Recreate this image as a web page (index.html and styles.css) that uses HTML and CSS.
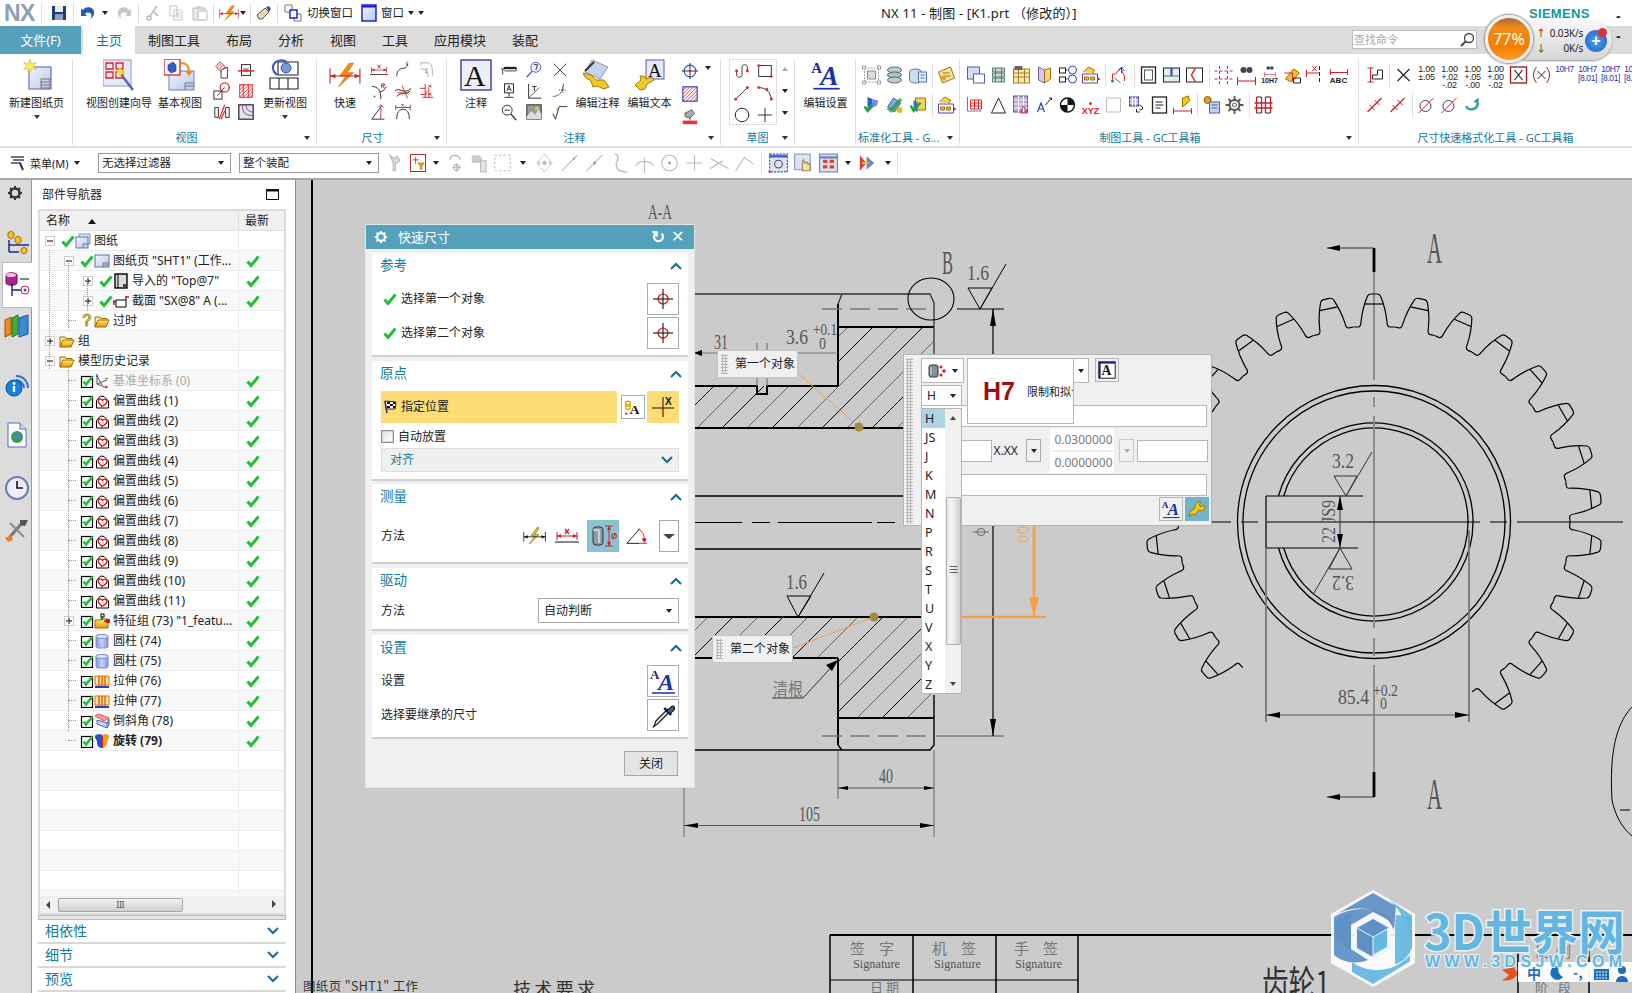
FILE: index.html
```html
<!DOCTYPE html>
<html lang="zh-CN">
<head>
<meta charset="utf-8">
<title>NX 11 - 制图</title>
<link rel="stylesheet" href="styles.css">
</head>
<body>
<svg class="defs" width="0" height="0" aria-hidden="true">
<defs>
<linearGradient id="gFold" x1="0" y1="0" x2="0" y2="1"><stop offset="0" stop-color="#ffe680"/><stop offset="1" stop-color="#e59a00"/></linearGradient>
<linearGradient id="gBlue" x1="0" y1="0" x2="1" y2="1"><stop offset="0" stop-color="#f4f6fc"/><stop offset="1" stop-color="#b9c6ea"/></linearGradient>
<linearGradient id="gCyl" x1="0" y1="0" x2="1" y2="0"><stop offset="0" stop-color="#7f93dd"/><stop offset=".5" stop-color="#c9d3f5"/><stop offset="1" stop-color="#7f93dd"/></linearGradient>
<pattern id="hatch" width="50" height="50" patternUnits="userSpaceOnUse"><path d="M0 50L50 0M-5 5L5-5M45 55L55 45" stroke="#000" stroke-width="1" fill="none"/><path d="M-5 30L30-5M20 55L55 20" stroke="#666" stroke-width="1" fill="none"/></pattern>
<pattern id="rh" width="4" height="4" patternUnits="userSpaceOnUse"><path d="M0 4L4 0" stroke="#d9252b"/></pattern>
</defs>
<symbol id="chk" viewBox="0 0 14 14"><path d="M1.5 7.5L5 11.5L12.5 2.5" fill="none" stroke="#1fbf33" stroke-width="3"/></symbol>
<symbol id="cbox" viewBox="0 0 14 14"><rect x="1.5" y="2.5" width="11" height="11" fill="#fff" stroke="#000" stroke-width="1.2"/><path d="M3.5 7.5L6 10.5L12.5 2.5" fill="none" stroke="#1fbf33" stroke-width="2.6"/></symbol>
<symbol id="minus" viewBox="0 0 10 10"><rect x=".5" y=".5" width="9" height="9" fill="#fff" stroke="#ccc"/><path d="M2 5h6" stroke="#000"/></symbol>
<symbol id="plus" viewBox="0 0 10 10"><rect x=".5" y=".5" width="9" height="9" fill="#fff" stroke="#ccc"/><path d="M2 5h6M5 2v6" stroke="#000"/></symbol>
<symbol id="fold" viewBox="0 0 16 16"><path d="M1 14V4h5l1 1.5h6V8" fill="#fff2b0" stroke="#9a6a00"/><path d="M1 14L4 7h11l-3 7z" fill="url(#gFold)" stroke="#9a6a00"/></symbol>
<symbol id="off" viewBox="0 0 16 16"><path d="M2.500 15V7.500L6.500 3L10 3.500L14.500 8V15z" fill="#fff" stroke="#000"/><path d="M8 13.500L4.500 9.500C3.500 7.500 5 5.500 7 6L8.500 7.300C9.500 5.800 12.500 6 13 8C13.200 9.500 11.500 11.500 8 13.500z" fill="#fff" stroke="#e01010" stroke-width="1.300"/></symbol>
<symbol id="sheets" viewBox="0 0 16 16"><rect x="4" y="1" width="11" height="10" fill="#dfe5f6" stroke="#7f8fc0"/><rect x="1" y="4" width="12" height="11" fill="url(#gBlue)" stroke="#5f74b5"/><path d="M8 11h5M8 11v4" stroke="#5f74b5"/></symbol>
<symbol id="sheet" viewBox="0 0 16 16"><rect x="1" y="2" width="14" height="12" fill="url(#gBlue)" stroke="#5f74b5"/><path d="M9 10h6M9 12h6M9 10v4" stroke="#777"/></symbol>
<symbol id="top" viewBox="0 0 16 16"><rect x="2" y="1" width="12" height="14" fill="#dcdcdc" stroke="#000" stroke-width="1.400"/><path d="M5 1v14" stroke="#000"/><rect x="10" y="11" width="3" height="3" fill="#444"/></symbol>
<symbol id="sect" viewBox="0 0 16 16"><path d="M3 7h10v7H3zM13 7V3" fill="#fff" stroke="#000"/><path d="M0 9h3M1 7v5M13 4h3" stroke="#d01010" stroke-width="1.400"/></symbol>
<symbol id="csys" viewBox="0 0 16 16"><path d="M3 2v9l10-4M3 11l10 4M3 3l5 9" fill="none" stroke="#555"/><path d="M3 1v3" stroke="#2030c0"/><path d="M11 6l3-1" stroke="#1a9a30"/><path d="M11 13l3 1.500" stroke="#d01010"/></symbol>
<symbol id="grp" viewBox="0 0 16 16"><path d="M1 15V7h5l1-1h7v9z" fill="url(#gFold)" stroke="#9a6a00"/><rect x="7" y="1" width="3" height="3" fill="#fff" stroke="#000"/><rect x="12" y="6" width="4" height="4" fill="#e01010"/><path d="M8 4v3M10 8h2" stroke="#000"/></symbol>
<symbol id="cyl" viewBox="0 0 16 16"><rect x="2" y="2" width="12" height="13" rx="2" fill="url(#gCyl)" stroke="#7a8fd0"/><ellipse cx="8" cy="3.500" rx="6" ry="2" fill="#dfe5fb" stroke="#7a8fd0"/></symbol>
<symbol id="ext" viewBox="0 0 16 16"><path d="M1 3h14v9H1z" fill="#fde3b0" stroke="#e07000"/><path d="M5 3v10M11 3v10M8 3v10" stroke="#e07000" stroke-width="1.500"/><path d="M1 14h14" stroke="#2a40c0" stroke-width="2"/></symbol>
<symbol id="chf" viewBox="0 0 16 16"><path d="M1 3L5 1L15 5L10 8Z" fill="#f2a0a0" stroke="#e0584a"/><path d="M3 7L13 10V15L3 11Z" fill="#c9d3f5" stroke="#4a60c0"/><path d="M13 10L15 6V12L13 15" fill="#8fa4e8" stroke="#4a60c0"/></symbol>
<symbol id="rev" viewBox="0 0 16 16"><path d="M1 3C1 1 8 1 8 2V15C4 15 3 12 3 8C2 7 1 5 1 3Z" fill="#2a50c8"/><path d="M8 2C10 1 15 1 15 3C15 5 14 7 13 8C13 12 12 15 8 15Z" fill="#f29a1a"/><path d="M7 3h2v12H7z" fill="#d02020"/></symbol>
<symbol id="maxi" viewBox="0 0 14 12"><rect x=".5" y=".5" width="12" height="10" fill="none" stroke="#111"/><path d="M.5 1.500h12" stroke="#111" stroke-width="2"/></symbol>
<symbol id="up" viewBox="0 0 12 8"><path d="M1 7L6 2L11 7" fill="none" stroke="#0f6f8f" stroke-width="2"/></symbol>
<symbol id="cvd" viewBox="0 0 12 8"><path d="M1 1L6 6L11 1" fill="none" stroke="#0f6f8f" stroke-width="2"/></symbol>
<symbol id="gear" viewBox="0 0 16 16"><circle cx="8" cy="8" r="4.500" fill="none" stroke="currentColor" stroke-width="2.600"/><path d="M8 1v3M8 12v3M1 8h3M12 8h3M3 3l2 2M11 11l2 2M13 3l-2 2M5 11l-2 2" stroke="currentColor" stroke-width="2"/></symbol>
<symbol id="tgt" viewBox="0 0 20 20"><circle cx="10" cy="10" r="5" fill="none" stroke="#e01010" stroke-width="1.200"/><path d="M0 10h20M10 0v20" stroke="#000" stroke-width="1"/></symbol>
<symbol id="flag" viewBox="0 0 14 14"><path d="M2 1L13 2L12 9L3 9Z" fill="#fff" stroke="#222"/><path d="M4 2h3v2H4zM10 2h2v2h-2zM7 4h3v2H7zM4 6h3v2H4zM10 6h2v2h-2z" fill="#111"/><path d="M2 1L4 13" stroke="#2a2a80" stroke-width="1.500"/></symbol>
<symbol id="drop" viewBox="0 0 24 24"><path d="M4 22l2-5L16 7l2 2L8 19z" fill="#cfe3ee" stroke="#111"/><path d="M13 6l6 6" stroke="#111" stroke-width="2"/><path d="M15 9l4-4c2-2 4 1 2 3l-3 3z" fill="#1e6fb0" stroke="#111"/></symbol>
<symbol id="wrench" viewBox="0 0 20 20"><path d="M2 18l3-3 3 1 4-5 3 1 3-3-1-3-3 2-2-2 2-3h-3l-3 3v3l-5 4z" fill="#f4c814" stroke="#9b7a00"/></symbol>
<symbol id="qd" viewBox="0 0 30 24"><path d="M18 1l-8 11h5L8 22l12-12h-5l5-8z" fill="#f4c814" stroke="#444" stroke-width=".7"/><path d="M1 7v12M28 7v12M1 13h27" stroke="#111" fill="none"/><path d="M1 13l5-2v4zM28 13l-5-2v4z" fill="#111"/></symbol>
<symbol id="qdr" viewBox="0 0 30 24"><path d="M19 1l-9 12h6L9 23l14-13h-6l6-9z" fill="#f58a16" stroke="#d56a00" stroke-width=".7"/><path d="M1 6v14M29 6v14M1 13h28" stroke="#c8202a" fill="none"/><path d="M1 13l5-2v4zM29 13l-5-2v4z" fill="#c8202a"/></symbol>
<symbol id="dx" viewBox="0 0 24 16"><path d="M10 1l4 5M14 1l-4 5" stroke="#c8202a" stroke-width="1.300"/><path d="M2 4v8M22 4v8M2 8h20" stroke="#c8202a"/><path d="M0 14h24" stroke="#111"/><path d="M2 8l4-2v4zM22 8l-4-2v4z" fill="#c8202a"/></symbol>
<symbol id="dm" viewBox="0 0 32 32"><rect width="32" height="32" fill="#8cc1d2"/><rect x="6" y="7" width="10" height="18" rx="3" fill="#8e9ea8" stroke="#333"/><path d="M6 10h6v13" stroke="#fff" fill="none"/><path d="M18 6h8M18 26h8M22 6v20" stroke="#c8202a"/><path d="M22 6l-2 4h4zM22 26l-2-4h4z" fill="#c8202a"/><circle cx="27" cy="16" r="2.500" fill="none" stroke="#c8202a"/><path d="M25 19l4-6" stroke="#c8202a"/></symbol>
<symbol id="ang" viewBox="0 0 24 24"><path d="M1 20L15 4M1 20h14" stroke="#111" fill="none"/><path d="M13 4c6 3 7 8 7 13" fill="none" stroke="#c8202a"/><path d="M20 19l-2-4h4zM15 20h8" fill="#c8202a" stroke="#c8202a"/></symbol>
<symbol id="ddi" viewBox="0 0 20 20"><rect x="2" y="4" width="9" height="12" rx="2" fill="#7f8f9a" stroke="#333"/><path d="M4 6v8" stroke="#ddd"/><circle cx="14" cy="6" r="1.500" fill="#c8202a"/><circle cx="17" cy="10" r="1.800" fill="#c8202a"/><circle cx="14" cy="14" r="1.500" fill="#c8202a"/></symbol>
<symbol id="new" viewBox="0 0 32 32"><rect x="8" y="8" width="22" height="22" fill="url(#gBlue)" stroke="#6d7fc4" stroke-width="1.300"/><path d="M20 23h9M20 26h9M20 20h9v9h-9z" fill="none" stroke="#777"/><path d="M9 0l1.500 5 5-1.500-3.500 3.500 3.500 3.500-5-1L9 14 7.500 9.500l-5 1L6 7 2.500 3.500l5 1.500z" fill="#ffee60" stroke="#c8b020" stroke-width=".6"/></symbol>
<symbol id="wiz" viewBox="0 0 32 32"><rect x="0" y="1" width="28" height="26" fill="#e6e9f6" stroke="#8a96c8"/><path d="M3 4h7v6H3zM13 4h7v6h-7zM3 13h7v6H3zM13 13h7v6h-7z" fill="none" stroke="#d9252b" stroke-width="1.300"/><path d="M17 14l13 17" stroke="#5866b8" stroke-width="2.500"/><path d="M17 7l1.500 4 4-1-3 3 3 3-4-1L17 19l-1.500-4-4 1 3-3-3-3 4 1z" fill="#f2e040"/></symbol>
<symbol id="base" viewBox="0 0 32 32"><rect x="5" y="12" width="25" height="19" fill="url(#gBlue)" stroke="#6d7fc4"/><path d="M21 24h9M21 27h9M21 24v7" stroke="#777"/><rect x="0" y="0" width="16" height="16" fill="#f7f7f7" stroke="#d9252b" stroke-width="1.300"/><path d="M4 6l5-3 3 3v6l-5 2-3-3z" fill="#3360c0" stroke="#123a90" stroke-width=".6"/><path d="M17 4c6 0 8 3 8 9" fill="none" stroke="#f08a10" stroke-width="2"/><path d="M21 12h8l-4 5z" fill="#f08a10"/></symbol>
<symbol id="upd" viewBox="0 0 32 32"><path d="M9 3h20v13H9zM1 19h28v11H1zM10 19v11M19 19v11" fill="none" stroke="#222" stroke-width="1.100"/><path d="M8 16C-2 8 8-3 18 3" fill="none" stroke="#3a55c0" stroke-width="2"/><circle cx="17" cy="9" r="5" fill="#7e97d8" stroke="#3a55c0"/></symbol>
<symbol id="edn" viewBox="0 0 32 32"><path d="M10 1l16 7-8 12-15-7z" fill="#c8d2ec" stroke="#8b97c8"/><path d="M1 14l8 2 5 5 8 0 5 7-5 2-7-3-4 1-2-6-6-4z" fill="#f2c82a" stroke="#9a7f00"/><path d="M3 12L12 3" stroke="#333" stroke-width="2"/></symbol>
<symbol id="s1" viewBox="0 0 20 20"><path d="M8 1l9 9-5 5-9-9z" fill="url(#rh)" stroke="#d9252b"/><path d="M9 10l7-3v12H9z" fill="#fff" stroke="#333"/></symbol>
<symbol id="s2" viewBox="0 0 20 20"><rect x="5" y="4" width="10" height="12" fill="#fff" stroke="#222"/><path d="M7 8h6v4H7z" fill="#999"/><path d="M1 11h18" stroke="#d9252b" stroke-width="1.600"/></symbol>
<symbol id="s3" viewBox="0 0 20 20"><circle cx="13" cy="6" r="5" fill="#fff" stroke="#d9252b" stroke-width="1.400"/><rect x="1" y="10" width="9" height="9" fill="#fff" stroke="#222"/><path d="M5 15l8-9" stroke="#333"/></symbol>
<symbol id="s4" viewBox="0 0 20 20"><rect x="3" y="3" width="14" height="14" fill="url(#rh)" stroke="#d9252b"/><path d="M7 3v14M13 3v14" stroke="#d9252b"/></symbol>
<symbol id="s5" viewBox="0 0 20 20"><path d="M2 5h4v11H2zM14 5h4v11h-4z" fill="none" stroke="#222"/><path d="M7 18L13 2M9 18l4-9" stroke="#d9252b" stroke-width="1.300"/></symbol>
<symbol id="s6" viewBox="0 0 20 20"><rect x="2" y="2" width="16" height="16" fill="#dfe3f2" stroke="#222" stroke-width="1.300"/><path d="M6 2c0 9 3 12 12 12M10 2c0 5 3 8 8 8" fill="none" stroke="#a03080"/></symbol>
<symbol id="d2" viewBox="0 0 20 20"><path d="M3 17c0-6 3-9 8-9 3 0 4-3 4-5" fill="none" stroke="#222"/><path d="M16 1c-3 0-3 4 0 4" fill="none" stroke="#c8202a"/></symbol>
<symbol id="d3" viewBox="0 0 20 20"><path d="M3 2h7c6 0 6 6 6 14M3 2v3M3 9c8 0 8 3 8 9" fill="none" stroke="#aaa"/><path d="M11 9H8l2 2-2 2h3" fill="none" stroke="#999"/></symbol>
<symbol id="d4" viewBox="0 0 20 20"><path d="M2 5c7 0 10 4 10 14M11 11c3 0 6-3 7-6" fill="none" stroke="#222"/><path d="M13 7V2h3v2h-3M14 4l2 3" fill="none" stroke="#c8202a"/><circle cx="5" cy="16" r="1" fill="#555"/></symbol>
<symbol id="d5" viewBox="0 0 20 20"><path d="M1 10c5-5 10 5 18-3M3 16c6-6 8 0 15-6" fill="none" stroke="#222"/><path d="M9 4L15 18M4 12h12" stroke="#c8202a"/></symbol>
<symbol id="d6" viewBox="0 0 20 20"><path d="M8 2v15M2 7h6M5 17h12M3 14h6v-4M12 6v11" fill="none" stroke="#c8202a"/><path d="M12 3l3 3M15 3l-3 3M12 12l3 3M15 12l-3 3" stroke="#c8202a"/></symbol>
<symbol id="d7" viewBox="0 0 20 20"><path d="M2 18L13 3M2 18h14" fill="none" stroke="#222"/><path d="M12 5v13M9 5l3-3 3 3" fill="none" stroke="#c8202a"/></symbol>
<symbol id="d8" viewBox="0 0 20 20"><path d="M3 18c0-8 3-11 7-11s7 3 7 11" fill="none" stroke="#222"/><path d="M2 5h16M2 2v6M18 2v6" stroke="#c8202a"/><path d="M8 1l3 3M11 1L8 4" stroke="#c8202a"/></symbol>
<symbol id="n1" viewBox="0 0 20 20"><path d="M1 9h4v-2h13v4H5M3 9v6" fill="none" stroke="#333"/><path d="M4 8h14" stroke="#111" stroke-width="2"/></symbol>
<symbol id="n2" viewBox="0 0 20 20"><circle cx="12" cy="7" r="5.500" fill="#eef" stroke="#3a55c0"/><path d="M8 11L2 18" stroke="#3a55c0" stroke-width="1.400"/><path d="M10 4h4l-2 6" fill="none" stroke="#222"/></symbol>
<symbol id="n3" viewBox="0 0 20 20"><path d="M3 3l14 14M17 3L3 17" stroke="#333"/></symbol>
<symbol id="n4" viewBox="0 0 20 20"><rect x="5" y="2" width="10" height="10" fill="#fff" stroke="#222"/><path d="M7.500 10L10 4l2.500 6M8.500 8h3" fill="none" stroke="#222"/><path d="M10 12v4M5 17h10" stroke="#222"/></symbol>
<symbol id="n5" viewBox="0 0 20 20"><path d="M4 2v16h14" fill="none" stroke="#222"/><path d="M4 18L16 6" stroke="#555"/><path d="M8 5h5M10.500 5v5" stroke="#222"/></symbol>
<symbol id="n6" viewBox="0 0 20 20"><path d="M2 16c8 0 11-5 12-14" fill="none" stroke="#3a55c0"/><path d="M9 9h8M13 5v8" stroke="#222" stroke-dasharray="1 1"/></symbol>
<symbol id="n7" viewBox="0 0 20 20"><circle cx="8" cy="8" r="5.500" fill="#fff" stroke="#222"/><path d="M12 12l6 7" stroke="#222" stroke-width="1.400"/><path d="M5 8h6" stroke="#222"/></symbol>
<symbol id="n8" viewBox="0 0 20 20"><rect x="2" y="2" width="16" height="16" fill="#999" stroke="#222"/><path d="M2 15l5-6 4 4 4-6 3 5v6H2z" fill="#ddd"/><circle cx="13" cy="6" r="2" fill="#f0c040"/></symbol>
<symbol id="n9" viewBox="0 0 20 20"><path d="M2 12l3 6 4-14h9" fill="none" stroke="#222"/><path d="M9 4l-3 4" stroke="#888"/></symbol>
<symbol id="n10" viewBox="0 0 20 20"><circle cx="10" cy="10" r="6.500" fill="none" stroke="#3a55c0" stroke-width="1.300"/><path d="M1 10h18M10 1v18" stroke="#222"/><circle cx="10" cy="10" r="1.500" fill="#d9252b"/></symbol>
<symbol id="n11" viewBox="0 0 20 20"><rect x="2" y="2" width="16" height="16" fill="url(#rh)" stroke="#3a55c0" stroke-width="1.400"/></symbol>
<symbol id="n12" viewBox="0 0 20 20"><path d="M4 6l8-4 3 4-5 5-5-1z" fill="#aaa" stroke="#555"/><path d="M10 11v3" stroke="#333"/><rect x="2" y="14" width="16" height="4" fill="#e8333a"/></symbol>
<symbol id="sk1" viewBox="0 0 20 20"><path d="M4 10v4c0 4 6 4 6 0V6c0-4 6-4 6 0v4" fill="none" stroke="#222"/><circle cx="4" cy="10" r="1.600" fill="#d9252b"/><circle cx="16" cy="10" r="1.600" fill="#d9252b"/></symbol>
<symbol id="sk2" viewBox="0 0 20 20"><rect x="3" y="4" width="14" height="12" fill="none" stroke="#222"/><circle cx="3" cy="4" r="1.500" fill="#d9252b"/><circle cx="17" cy="16" r="1.500" fill="#d9252b"/></symbol>
<symbol id="sk3" viewBox="0 0 20 20"><path d="M3 17L16 4" stroke="#222"/><circle cx="3" cy="17" r="1.600" fill="#d9252b"/><circle cx="16" cy="4" r="1.600" fill="#d9252b"/></symbol>
<symbol id="sk4" viewBox="0 0 20 20"><path d="M3 4c8 0 13 5 14 13" fill="none" stroke="#222"/><circle cx="3" cy="4" r="1.600" fill="#d9252b"/><circle cx="12" cy="6" r="1.600" fill="#d9252b"/><circle cx="17" cy="17" r="1.600" fill="#d9252b"/></symbol>
<symbol id="sk5" viewBox="0 0 20 20"><circle cx="10" cy="10" r="7.500" fill="none" stroke="#222" stroke-width="1.100"/></symbol>
<symbol id="sk6" viewBox="0 0 20 20"><path d="M10 2v16M2 10h16" stroke="#222"/></symbol>
<symbol id="g1" viewBox="0 0 20 20"><path d="M3 3h14v14H3z" fill="none" stroke="#9aa" stroke-dasharray="2 1"/><path d="M6 6h8v8H6z" fill="#ddd" stroke="#888"/><path d="M1 1h3v3H1zM16 1h3v3h-3zM1 16h3v3H1zM16 16h3v3h-3z" fill="#fff" stroke="#999"/></symbol>
<symbol id="g2" viewBox="0 0 20 20"><ellipse cx="10" cy="5" rx="7" ry="3" fill="#bcd" stroke="#567"/><ellipse cx="10" cy="10" rx="7" ry="3" fill="#a9c9a6" stroke="#567"/><ellipse cx="10" cy="15" rx="7" ry="3" fill="#bcd" stroke="#567"/></symbol>
<symbol id="g3" viewBox="0 0 20 20"><ellipse cx="8" cy="7" rx="6" ry="3" fill="#cde" stroke="#678"/><path d="M2 7v8c0 4 12 4 12 0V7" fill="#cde" stroke="#678"/><rect x="11" y="7" width="8" height="10" fill="#e6eaf6" stroke="#5a73c0"/><path d="M13 10h4M13 13h4" stroke="#5a73c0"/></symbol>
<symbol id="g4" viewBox="0 0 20 20"><path d="M2 7l12-5 4 11-12 5z" fill="#f5e3a8" stroke="#a07000"/><path d="M6 8h7M7 11h7" stroke="#a07000"/><circle cx="7" cy="13" r="2.500" fill="#f2a010"/></symbol>
<symbol id="g5" viewBox="0 0 20 20"><path d="M6 2l5 2v9l-5-1z" fill="#2a60d0"/><path d="M2 12l4 6 11-12-3-1-8 8-2-2z" fill="#20a040"/><path d="M11 4l5 2v4l-5 3z" fill="#6a90e0"/></symbol>
<symbol id="g6" viewBox="0 0 20 20"><path d="M3 12L9 3l7 5-6 9z" fill="#8aa8e8" stroke="#3a55c0"/><path d="M2 14l5 4 11-13-3-2-8 9z" fill="#20a040" opacity=".8"/><circle cx="15" cy="15" r="3" fill="#e8b820"/></symbol>
<symbol id="g7" viewBox="0 0 20 20"><path d="M8 3h10v12H8z" fill="#f4d060" stroke="#a07000"/><path d="M6 5l4 2v10l-4-2z" fill="#3a70d0"/><path d="M2 11l4 7 8-10-2-1-6 6-2-3z" fill="#20a040"/></symbol>
<symbol id="g8" viewBox="0 0 20 20"><path d="M2 9h15v9H2z" fill="#fff" stroke="#5a3fb0"/><path d="M4 12h4v3H4zM10 12h4v3h-4z" fill="#f2c020" stroke="#a07000"/><path d="M3 7l5-5 6 3-2 4" fill="#f2d060" stroke="#a07000"/><path d="M17 12l3 2-3 2z" fill="#a030b0"/></symbol>
<symbol id="t1" viewBox="0 0 20 20"><rect x="2" y="2" width="12" height="12" fill="#d4dcf4" stroke="#4a60b0"/><rect x="8" y="9" width="11" height="9" fill="#fff" stroke="#4a60b0"/></symbol>
<symbol id="t2" viewBox="0 0 20 20"><path d="M4 3h12v4H4zM4 8h12v4H4zM4 13h12v4H4z" fill="#c7d9cb" stroke="#5a7d70"/><path d="M7 3v14M13 3v14" stroke="#5a7d70"/></symbol>
<symbol id="t3" viewBox="0 0 20 20"><rect x="2" y="4" width="16" height="14" fill="#fce9a8" stroke="#a08030"/><path d="M2 8h16M2 12h16M7 4v14M13 4v14" stroke="#a08030"/><path d="M3 1h8v4H3z" fill="#666"/></symbol>
<symbol id="t4" viewBox="0 0 20 20"><path d="M4 2l6 3v13l-6-3z" fill="#d8c7f0" stroke="#7060b0"/><path d="M10 5l6-2v11l-6 4z" fill="#f4d680" stroke="#a07000"/></symbol>
<symbol id="t5" viewBox="0 0 20 20"><rect x="2" y="3" width="6" height="5" fill="none" stroke="#222"/><rect x="2" y="12" width="6" height="5" fill="none" stroke="#222"/><path d="M8 5h2M8 14h2" stroke="#222"/><circle cx="15" cy="5" r="4" fill="#fff" stroke="#2a40c0"/><circle cx="15" cy="14" r="4" fill="#fff" stroke="#2a40c0"/></symbol>
<symbol id="t7" viewBox="0 0 20 20"><path d="M3 16V9h3l5-6 4 8v5" fill="none" stroke="#d9252b"/><circle cx="3" cy="16" r="1.500" fill="#1a9a30"/><path d="M12 2v6M9 6l3-4 3 4" stroke="#2a40c0" fill="none"/><path d="M5 13l6 5" stroke="#1a9a30"/></symbol>
<symbol id="t8" viewBox="0 0 20 20"><rect x="3" y="2" width="14" height="16" fill="#fff" stroke="#222" stroke-width="1.300"/><rect x="6" y="5" width="8" height="10" fill="none" stroke="#555"/></symbol>
<symbol id="t9" viewBox="0 0 20 20"><rect x="2" y="3" width="16" height="14" fill="#e6ebf4" stroke="#222"/><path d="M10 3v8" stroke="#2a40c0" stroke-width="2"/><path d="M2 11h16" stroke="#1a9a30"/></symbol>
<symbol id="t10" viewBox="0 0 20 20"><rect x="2" y="3" width="16" height="14" fill="#fff" stroke="#222"/><path d="M11 3l-4 7 4 7" fill="none" stroke="#d9252b" stroke-width="1.500"/></symbol>
<symbol id="t11" viewBox="0 0 20 20"><path d="M6 1v18M14 1v18M1 6h18M1 14h18" stroke="#c02080" stroke-dasharray="3 2"/></symbol>
<symbol id="t12" viewBox="0 0 20 20"><circle cx="7" cy="5" r="3" fill="#445"/><circle cx="13" cy="5" r="3" fill="#445"/><path d="M1 16h18M1 12v8M19 12v8" stroke="#c8202a"/></symbol>
<symbol id="t13" viewBox="0 0 20 20"><path d="M3 14l8-10 6 4-8 9z" fill="#f2c020" stroke="#a07000"/><path d="M2 8h8v8" fill="none" stroke="#d9252b"/><path d="M11 13h7v5h-7z" fill="none" stroke="#222"/></symbol>
<symbol id="t14" viewBox="0 0 20 20"><path d="M14 1v18" stroke="#222" stroke-dasharray="4 2"/><path d="M1 8h13M1 5v7" stroke="#c8202a"/><path d="M7 1l4 5M11 1L7 6" stroke="#c8202a"/></symbol>
<symbol id="u1" viewBox="0 0 20 20"><path d="M3 3h6M3 17h6M6 3v14" stroke="#c8202a"/><path d="M8 14h10V5h-5v5H8z" fill="none" stroke="#222"/></symbol>
<symbol id="u2" viewBox="0 0 20 20"><path d="M4 4l12 12M16 4L4 16" stroke="#222" stroke-width="1.200"/></symbol>
<symbol id="u3" viewBox="0 0 20 20"><rect x="2" y="2" width="16" height="16" fill="none" stroke="#a02020" stroke-width="1.400"/><path d="M6 5l8 10M14 5L6 15" stroke="#222" stroke-width="1.200"/></symbol>
<symbol id="u4" viewBox="0 0 20 20"><path d="M5 2c-4 5-4 11 0 16M15 2c4 5 4 11 0 16" fill="none" stroke="#a02020"/><path d="M6 6l8 8M14 6l-8 8" stroke="#222"/></symbol>
<symbol id="u5" viewBox="0 0 20 20"><path d="M3 17L17 3" stroke="#c8202a" stroke-width="1.300"/><path d="M5 10l5 5M10 5l5 5" stroke="#c8202a"/></symbol>
<symbol id="u6" viewBox="0 0 20 20"><circle cx="9" cy="11" r="5.500" fill="none" stroke="#444"/><path d="M2 18L17 3" stroke="#c8202a"/></symbol>
<symbol id="u7" viewBox="0 0 20 20"><path d="M4 11c0 4 9 5 11-1V5l-3 2" fill="none" stroke="#38a0a8" stroke-width="2.500"/></symbol>
<symbol id="y1" viewBox="0 0 20 20"><path d="M3 3h14v14H3z" fill="#fff" stroke="#bbb"/></symbol>
<symbol id="y2" viewBox="0 0 20 20"><path d="M2 2v14h14" fill="none" stroke="#777"/><path d="M5 5h11v9H5z" fill="none" stroke="#d9252b"/><path d="M5 8h11M5 11h11M9 5v9M13 5v9" stroke="#d9252b"/></symbol>
<symbol id="y3" viewBox="0 0 20 20"><path d="M10 3l-7 15h14z" fill="none" stroke="#222"/></symbol>
<symbol id="y4" viewBox="0 0 20 20"><rect x="2" y="1" width="14" height="16" fill="#bba8e0" stroke="#666"/><path d="M2 5h14M2 9h14M2 13h14M7 1v16M12 1v16" stroke="#fff"/><path d="M12 11l-3 7h7z" fill="none" stroke="#d9252b"/></symbol>
<symbol id="y5" viewBox="0 0 20 20"><path d="M3 17l3.500-9L10 17M4.500 14h4" fill="none" stroke="#2a40c0" stroke-width="1.200"/><path d="M11 10l6-7M15 3h2v2" stroke="#222" fill="none"/></symbol>
<symbol id="y6" viewBox="0 0 20 20"><circle cx="10" cy="10" r="7" fill="#fff" stroke="#111" stroke-width="1.400"/><path d="M10 3a7 7 0 0 1 7 7h-7zM10 17a7 7 0 0 1-7-7h7z" fill="#111"/></symbol>
<symbol id="y8" viewBox="0 0 20 20"><rect x="3" y="2" width="9" height="9" fill="#bba8e0" stroke="#3a3aa0"/><path d="M3 5h9M3 8h9M6 2v9M9 2v9" stroke="#fff"/><path d="M13 10l3 2v2l-3 1M10 14v3h3" fill="none" stroke="#222"/></symbol>
<symbol id="y9" viewBox="0 0 20 20"><rect x="3" y="2" width="14" height="16" fill="#fff" stroke="#222" stroke-width="1.300"/><path d="M6 7h7M6 10h8M6 13h5" stroke="#222"/></symbol>
<symbol id="y10" viewBox="0 0 20 20"><path d="M10 3l6-2 1 5-7 6z" fill="#f4c814" stroke="#a07000"/><path d="M1 16h18M1 13v6M19 13v6" stroke="#c8202a"/></symbol>
<symbol id="y11" viewBox="0 0 20 20"><rect x="8" y="7" width="10" height="11" fill="#c4d0f0" stroke="#4a60b0"/><path d="M10 10h6M10 13h6" stroke="#4a60b0"/><circle cx="6" cy="5" r="3.500" fill="#e0a020" stroke="#906000"/></symbol>
<symbol id="y12" viewBox="0 0 20 20"><circle cx="10" cy="10" r="5" fill="none" stroke="#555" stroke-width="2"/><circle cx="10" cy="10" r="2" fill="none" stroke="#555"/><path d="M10 1v4M10 15v4M1 10h4M15 10h4M4 4l2.500 2.500M13.500 13.500L16 16M16 4l-2.500 2.500M6.500 13.500L4 16" stroke="#555" stroke-width="1.800"/></symbol>
<symbol id="y13" viewBox="0 0 20 20"><path d="M3 2v16M8 2v16M12 2v16M17 2v16M1 8h18M1 13h18" stroke="#c8202a" stroke-width="1.300"/><path d="M3 2h5M12 2h5M3 18h5M12 18h5" stroke="#222"/></symbol>
<symbol id="save" viewBox="0 0 16 16"><path d="M1 1h14v14H1z" fill="#1f3f72"/><rect x="4" y="1" width="8" height="6" fill="#e8eef6"/><rect x="4" y="9" width="8" height="6" fill="#8aa0c4"/></symbol>
<symbol id="undo" viewBox="0 0 16 16"><path d="M5 3c5-2 10 1 9 6-.5 2.500-2 4-4 5 2-2 2-5 0-6-2-1-4-.5-5 1l2 2H1V4l2 1z" fill="#1d5fae"/></symbol>
<symbol id="redo" viewBox="0 0 16 16"><path d="M11 3C6 1 1 4 2 9c.5 2.500 2 4 4 5-2-2-2-5 0-6 2-1 4-.5 5 1l-2 2h6V4l-2 1z" fill="#c8c8c8"/></symbol>
<symbol id="cut" viewBox="0 0 16 16"><path d="M12 1L5 11M8 6l5 5" stroke="#bbb" stroke-width="1.500"/><circle cx="4" cy="13" r="2" fill="none" stroke="#bbb" stroke-width="1.500"/></symbol>
<symbol id="copy" viewBox="0 0 16 16"><path d="M2 1h7v10H2zM6 5h7l1 1v9H6z" fill="#fff" stroke="#c4c4c4"/><path d="M8 8h4M8 10h4M8 12h4" stroke="#c4c4c4"/></symbol>
<symbol id="paste" viewBox="0 0 16 16"><path d="M1 3h12v12H1z" fill="#e8e8e8" stroke="#bbb"/><path d="M5 1h4v3H5z" fill="#ccc"/><path d="M6 6h9v9H6z" fill="#fff" stroke="#bbb"/></symbol>
<symbol id="eraser" viewBox="0 0 16 16"><path d="M1 10l8-7 4 4-7 7H3z" fill="#e8d8a8" stroke="#555"/><path d="M10 2l3-1 2 3-2 3z" fill="#3a55a0"/></symbol>
<symbol id="swin" viewBox="0 0 18 18"><path d="M1 1h7v7H1zM10 10h7v7h-7z" fill="none" stroke="#777"/><rect x="6" y="6" width="7" height="8" fill="#fff" stroke="#1414d0" stroke-width="1.400"/></symbol>
<symbol id="win" viewBox="0 0 16 18"><rect x="1" y="1" width="14" height="16" fill="url(#gBlue)" stroke="#1414d0" stroke-width="1.400"/><path d="M1 2.500h14" stroke="#1414d0" stroke-width="2"/></symbol>
<symbol id="mag" viewBox="0 0 16 16"><circle cx="10" cy="6" r="4.500" fill="#fff" stroke="#444" stroke-width="1.300"/><path d="M7 9l-5 5" stroke="#444" stroke-width="2"/></symbol>
<symbol id="menu" viewBox="0 0 18 18"><path d="M2 3h13M4 6h11M2 9h10" stroke="#3a4a60" stroke-width="1.400"/><path d="M11 9l3 7" stroke="#333" stroke-width="2"/></symbol>
<symbol id="f1" viewBox="0 0 18 18"><path d="M3 2l4 3 3-2 2 4-4 3v6H6V9z" fill="#d8d8d8" stroke="#bbb"/></symbol>
<symbol id="f2" viewBox="0 0 18 18"><path d="M6 1v9M2 5h8" stroke="#444"/><path d="M9 9h8l-3 4v4h-2v-4z" fill="#f0a020" stroke="#c07a00"/></symbol>
<symbol id="f3" viewBox="0 0 18 18"><path d="M3 6C3 1 12 1 12 6" fill="none" stroke="#bbb" stroke-width="1.500"/><path d="M9 9v8M5 13h8" stroke="#bbb"/><circle cx="9" cy="13" r="2.500" fill="none" stroke="#bbb"/></symbol>
<symbol id="f4" viewBox="0 0 18 18"><path d="M2 2h7l3 4-3 3H2z" fill="#ccc"/><path d="M10 7h5v10h-5z" fill="#e4e4e4" stroke="#bbb"/></symbol>
<symbol id="f5" viewBox="0 0 18 18"><rect x="2" y="2" width="14" height="14" fill="none" stroke="#bbb" stroke-dasharray="2 2"/></symbol>
<symbol id="f6" viewBox="0 0 18 18"><path d="M9 1l7 8-7 8-7-8z" fill="none" stroke="#ccc" stroke-dasharray="2 1"/><circle cx="9" cy="9" r="2" fill="#bbb"/><circle cx="4" cy="9" r="1.500" fill="#ccc"/><circle cx="14" cy="9" r="1.500" fill="#ccc"/></symbol>
<symbol id="f7" viewBox="0 0 18 18"><path d="M2 16L16 2" stroke="#bbb"/><circle cx="13" cy="5" r="1" fill="#999"/></symbol>
<symbol id="f8" viewBox="0 0 18 18"><path d="M2 16L16 2" stroke="#bbb"/><circle cx="9" cy="9" r="1.400" fill="#999"/></symbol>
<symbol id="f9" viewBox="0 0 18 18"><path d="M5 1c3 0 3 4 2 6s-2 4 0 7 6 3 9 3" fill="none" stroke="#bbb" stroke-width="1.200"/></symbol>
<symbol id="f10" viewBox="0 0 18 18"><path d="M1 12c2-6 14-6 16 0M9 4v14" fill="none" stroke="#bbb"/></symbol>
<symbol id="f11" viewBox="0 0 18 18"><circle cx="9" cy="9" r="7" fill="none" stroke="#bbb"/><circle cx="9" cy="9" r="1.300" fill="#999"/></symbol>
<symbol id="f12" viewBox="0 0 18 18"><path d="M9 2v14M2 9h14" stroke="#bbb"/></symbol>
<symbol id="f13" viewBox="0 0 18 18"><path d="M1 5l16 9M1 14L12 7" stroke="#bbb"/></symbol>
<symbol id="f14" viewBox="0 0 18 18"><path d="M1 16L9 4l8 6" fill="none" stroke="#bbb"/></symbol>
<symbol id="f15" viewBox="0 0 18 18"><rect x="1" y="1" width="16" height="16" fill="#dde3f2" stroke="#3a55c0" stroke-dasharray="2 1"/><path d="M1 3h16" stroke="#3a55c0" stroke-width="2"/><circle cx="9" cy="10" r="3.500" fill="none" stroke="#555"/><circle cx="1" cy="17" r="1" fill="#d9252b"/></symbol>
<symbol id="f16" viewBox="0 0 18 18"><rect x="1" y="1" width="14" height="14" fill="#dde3f2" stroke="#8a96c8"/><path d="M8 16V8l1-2 1 3 2-1 1 2 2 0v6z" fill="#f4e0b0" stroke="#a08050"/></symbol>
<symbol id="f17" viewBox="0 0 18 18"><rect x="1" y="1" width="16" height="16" fill="#dde3f2" stroke="#6d7fc4"/><path d="M1 4h16" stroke="#6d7fc4" stroke-width="2"/><path d="M4 6h4v3H4zM10 6h4v3h-4zM4 11h4v3H4zM10 11h4v3h-4z" fill="#d9452b"/></symbol>
<symbol id="f18" viewBox="0 0 18 18"><path d="M3 2l6 7-6 7z" fill="#e03a3a"/><path d="M9 3l7 6-7 6z" fill="#6a86d8"/><path d="M5 8h6v2H5z" fill="#f0c020"/></symbol>
<symbol id="r1" viewBox="0 0 26 26"><path d="M4 3l3-2 3 2v4l-3 2-3-2zM11 8l3-2 3 2v4l-3 2-3-2z" fill="#f2c020" stroke="#b07000"/><path d="M17 19l3-2 3 2v3l-3 2-3-2z" fill="#f2c020" stroke="#b07000"/><path d="M5 10v12M5 15h20M5 22h10" stroke="#1a2a90" stroke-width="1.500"/></symbol>
<symbol id="r2" viewBox="0 0 26 26"><path d="M1 3c0-3 11-3 11 0v8c0 3-11 3-11 0z" fill="#b02090" stroke="#701060"/><ellipse cx="6" cy="3" rx="5" ry="2" fill="#f0c0e0"/><path d="M7 11v13M7 18h9" stroke="#1a2a90" stroke-width="1.500"/><path d="M15 7h9" stroke="#111"/><circle cx="20" cy="18" r="4" fill="none" stroke="#a02080"/><circle cx="20" cy="18" r="1.500" fill="#a02080"/></symbol>
<symbol id="r3" viewBox="0 0 26 26"><path d="M1 6l6-3v17l-6 3z" fill="#f08a20" stroke="#a05000"/><path d="M8 4l6-3v19l-6 3z" fill="#40b040" stroke="#207020"/><path d="M15 4l9-3v19l-9 3z" fill="#3a8ad8" stroke="#1a5aa0"/></symbol>
<symbol id="r4" viewBox="0 0 26 26"><path d="M12 4c7 0 12 5 12 12" fill="none" stroke="#2a70d0" stroke-width="2"/><path d="M12 8c4 0 8 4 8 8" fill="none" stroke="#2a70d0" stroke-width="2"/><circle cx="10" cy="16" r="8" fill="#1a82d8" stroke="#0a50a0"/><path d="M10 14v6" stroke="#fff" stroke-width="2.400"/><circle cx="10" cy="11.500" r="1.400" fill="#fff"/></symbol>
<symbol id="r5" viewBox="0 0 26 26"><path d="M4 1h12l6 6v18H4z" fill="#fff" stroke="#4a70c0"/><path d="M16 1v6h6" fill="#cfe0f6" stroke="#4a70c0"/><circle cx="13" cy="15" r="6" fill="#3a9a50"/><path d="M10 11h6l1 4-6 3z" fill="#4a80d0"/></symbol>
<symbol id="r6" viewBox="0 0 26 26"><circle cx="13" cy="13" r="11" fill="#eef" stroke="#6a7fa8" stroke-width="2"/><path d="M13 6v7h6" fill="none" stroke="#111" stroke-width="1.600"/></symbol>
<symbol id="r7" viewBox="0 0 26 26"><path d="M4 22L18 6" stroke="#777" stroke-width="3"/><path d="M16 3h8l-3 6-5-1z" fill="#555"/><path d="M6 6l14 14" stroke="#888" stroke-width="2"/><path d="M1 21l6-3 2 5-5 2z" fill="#f08020"/></symbol>
<g id="gtooth" fill="none" stroke="#000" stroke-width="1.200"><path d="M-20.400 -195L-16 -195Q-13 -195 -13 -200C-12 -210 -9 -220 -6.500 -226Q-5.500 -228 -3 -228L3 -228Q5.500 -228 6.500 -226C9 -220 12 -210 13 -200Q13 -195 16 -195L20.400 -195"/><path d="M-9 -218L9 -218"/></g>
</svg>

<div class="app">
  <header class="titlebar">
    <span class="nx">NX</span><i class="tsep"></i>
    <svg class="i16 t-save"><use href="#save"/></svg><i class="tsep t-a"></i>
    <svg class="i16 t-undo"><use href="#undo"/></svg><i class="dn t-dn1"></i>
    <svg class="i16 t-redo"><use href="#redo"/></svg><i class="tsep t-b"></i>
    <svg class="i16 t-cut"><use href="#cut"/></svg>
    <svg class="i16 t-copy"><use href="#copy"/></svg>
    <svg class="i16 t-paste"><use href="#paste"/></svg><i class="tsep t-c"></i>
    <svg class="i20 t-qd"><use href="#qdr"/></svg><i class="dn t-dn2"></i><i class="tsep t-d"></i>
    <svg class="i16 t-er"><use href="#eraser"/></svg><i class="tsep t-e"></i>
    <svg class="i18 t-sw"><use href="#swin"/></svg><span class="t-txt">切换窗口</span>
    <svg class="i18 t-win"><use href="#win"/></svg><span class="t-txt t-w2">窗口</span><i class="dn t-dn3"></i><i class="dn t-dn4"></i>
    <span class="apptitle">NX 11 - 制图 - [K1.prt （修改的）]</span>
    <span class="siemens">SIEMENS</span>
    <span class="winmin">-</span>
  </header>

  <nav class="tabs">
    <span class="tab-file">文件(F)</span>
    <span class="tab active">主页</span>
    <span class="tab">制图工具</span>
    <span class="tab">布局</span>
    <span class="tab">分析</span>
    <span class="tab">视图</span>
    <span class="tab">工具</span>
    <span class="tab">应用模块</span>
    <span class="tab">装配</span>
    <span class="search"><span>查找命令</span><svg class="i16"><use href="#mag"/></svg></span>
  </nav>

  <section class="ribbon">
    <div class="grp g1w"><div class="gbody">
      <div class="big w73"><svg class="i32"><use href="#new"/></svg><span>新建图纸页</span><i class="dn"></i></div>
    </div></div>
    <div class="grp g2w"><div class="gbody pl15">
      <div class="big w62"><svg class="i32"><use href="#wiz"/></svg><span>视图创建向导</span></div>
      <div class="big w60"><svg class="i32"><use href="#base"/></svg><span>基本视图</span></div>
      <div class="sgrid c2">
        <svg class="i18"><use href="#s1"/></svg><svg class="i18"><use href="#s2"/></svg>
        <svg class="i18"><use href="#s3"/></svg><svg class="i18"><use href="#s4"/></svg>
        <svg class="i18"><use href="#s5"/></svg><svg class="i18"><use href="#s6"/></svg>
      </div>
      <div class="big w54"><svg class="i32"><use href="#upd"/></svg><span>更新视图</span><i class="dn"></i></div>
    </div><div class="glabel lp16">视图<i class="dn gl-dn"></i></div></div>
    <div class="grp g3w"><div class="gbody pl6">
      <div class="big w44"><svg class="i32"><use href="#qdr"/></svg><span>快速</span></div>
      <div class="sgrid c3">
        <svg class="i18"><use href="#dx"/></svg><svg class="i18"><use href="#d2"/></svg><svg class="i18"><use href="#d3"/></svg>
        <svg class="i18"><use href="#d4"/></svg><svg class="i18"><use href="#d5"/></svg><svg class="i18"><use href="#d6"/></svg>
        <svg class="i18"><use href="#d7"/></svg><svg class="i18"><use href="#d8"/></svg><i></i>
      </div>
    </div><div class="glabel lp18">尺寸<i class="dn gl-dn"></i></div></div>
    <div class="grp g4w"><div class="gbody pl9">
      <div class="big w40"><svg class="i32" viewBox="0 0 32 32"><rect x="1" y="1" width="30" height="30" fill="#eceef8" stroke="#4c4490" stroke-width="1.500"/><text x="4" y="27" class="sv-s" font-size="30" fill="#111">A</text></svg><span>注释</span></div>
      <div class="sgrid c3n">
        <svg class="i18"><use href="#n1"/></svg><svg class="i18"><use href="#n2"/></svg><svg class="i18"><use href="#n3"/></svg>
        <svg class="i18"><use href="#n4"/></svg><svg class="i18"><use href="#n5"/></svg><svg class="i18"><use href="#n6"/></svg>
        <svg class="i18"><use href="#n7"/></svg><svg class="i18"><use href="#n8"/></svg><svg class="i18"><use href="#n9"/></svg>
      </div>
      <div class="big w50"><svg class="i32"><use href="#edn"/></svg><span>编辑注释</span></div>
      <div class="big w54"><svg class="i32" viewBox="0 0 32 32"><rect x="12" y="1" width="18" height="19" fill="#e6e9f6" stroke="#5a5aa0"/><text x="14" y="18" class="sv-s" font-size="19" fill="#111">A</text><path d="M1 26l6-5-1-4 4 0 2 3 6-2 2 3-7 4-2 5-5 1z" fill="#f2c82a" stroke="#9a7f00"/></svg><span>编辑文本</span></div>
      <div class="sgrid c1">
        <svg class="i18"><use href="#n10"/></svg><svg class="i18"><use href="#n11"/></svg><svg class="i18"><use href="#n12"/></svg>
      </div>
      <i class="dn n-dn"></i>
    </div><div class="glabel lp18">注释<i class="dn gl-dn"></i></div></div>
    <div class="grp g5w"><div class="gbody pl8">
      <div class="sgrid c2s">
        <svg class="i18"><use href="#sk1"/></svg><svg class="i18"><use href="#sk2"/></svg>
        <svg class="i18"><use href="#sk3"/></svg><svg class="i18"><use href="#sk4"/></svg>
        <svg class="i18"><use href="#sk5"/></svg><svg class="i18"><use href="#sk6"/></svg>
      </div>
      <div class="ups"><i class="upa"></i><i class="dn"></i><i class="dn dnl"></i></div>
    </div><div class="glabel">草图<i class="dn gl-dn"></i></div></div>
    <div class="grp g6w"><div class="gbody">
      <div class="big w61"><svg class="i32" viewBox="0 0 28 28"><text x="1" y="12" class="sv-s" fill="#2a2080" font-size="13" font-weight="700">A</text><text x="9" y="23" class="sv-s it" fill="#1a2fb0" font-size="24" font-weight="700">A</text><path d="M3 26h23" stroke="#1a2fb0" stroke-width="1.500"/></svg><span>编辑设置</span></div>
    </div></div>
    <div class="grp g7w"><div class="gbody col">
      <div class="irow"><svg class="ci"><use href="#g1"/></svg><svg class="ci"><use href="#g2"/></svg><svg class="ci"><use href="#g3"/></svg><i class="sep"></i><svg class="ci"><use href="#g4"/></svg></div>
      <div class="irow"><svg class="ci"><use href="#g5"/></svg><svg class="ci"><use href="#g6"/></svg><svg class="ci"><use href="#g7"/></svg><i class="sep"></i><svg class="ci"><use href="#g8"/></svg></div>
    </div><div class="glabel">标准化工具 - G...<i class="dn gl-dn"></i></div></div>
    <div class="grp g8w"><div class="gbody col">
      <div class="irow"><svg class="ci"><use href="#t1"/></svg><svg class="ci"><use href="#t2"/></svg><svg class="ci"><use href="#t3"/></svg><svg class="ci"><use href="#t4"/></svg><svg class="ci"><use href="#t5"/></svg><svg class="ci"><use href="#g8"/></svg><i class="sep"></i><svg class="ci"><use href="#t7"/></svg><i class="sep"></i><svg class="ci"><use href="#t8"/></svg><svg class="ci"><use href="#t9"/></svg><svg class="ci"><use href="#t10"/></svg><i class="sep"></i><svg class="ci"><use href="#t11"/></svg><svg class="ci"><use href="#t12"/></svg><span class="ci tiny2"><svg class="i12"><use href="#t12"/></svg>10H7</span><svg class="ci"><use href="#t13"/></svg><svg class="ci"><use href="#t14"/></svg><span class="ci tiny2 abc"><i class="dimbar"></i>ABC</span></div>
      <div class="irow"><svg class="ci"><use href="#y2"/></svg><svg class="ci"><use href="#y3"/></svg><svg class="ci"><use href="#y4"/></svg><svg class="ci"><use href="#y5"/></svg><svg class="ci"><use href="#y6"/></svg><span class="ci tiny2 xyz"><i class="rdot"></i>XYZ</span><svg class="ci"><use href="#y1"/></svg><svg class="ci"><use href="#y8"/></svg><svg class="ci"><use href="#y9"/></svg><svg class="ci"><use href="#y10"/></svg><i class="sep"></i><svg class="ci"><use href="#y11"/></svg><svg class="ci"><use href="#y12"/></svg><i class="sep"></i><svg class="ci"><use href="#y13"/></svg></div>
    </div><div class="glabel lp18">制图工具 - GC工具箱<i class="dn gl-dn"></i></div></div>
    <div class="grp g9w"><div class="gbody col">
      <div class="irow"><svg class="ci"><use href="#u1"/></svg><i class="sep"></i><svg class="ci"><use href="#u2"/></svg><span class="ci tol">1.00<b>±.05</b></span><span class="ci tol">1.00<b>+.02<br>-.02</b></span><span class="ci tol">1.00<b>+.05<br>-.00</b></span><span class="ci tol">1.00<b>+.00<br>-.02</b></span><svg class="ci"><use href="#u3"/></svg><svg class="ci"><use href="#u4"/></svg><span class="ci fit">10H7</span><span class="ci fit">10H7<br>[8.01]</span><span class="ci fit">10H7<br>[8.01]</span><span class="ci fit">10H7<br>[8.01]</span></div>
      <div class="irow"><svg class="ci"><use href="#u5"/></svg><svg class="ci"><use href="#u5"/></svg><i class="sep"></i><svg class="ci"><use href="#u6"/></svg><svg class="ci"><use href="#u6"/></svg><svg class="ci"><use href="#u7"/></svg></div>
    </div><div class="glabel">尺寸快速格式化工具 - GC工具箱</div></div>
  </section>

  <section class="selbar">
    <svg class="i18 sb-m"><use href="#menu"/></svg><span class="sb-menu">菜单(M)</span><i class="dn sb-d"></i>
    <span class="combo c-a"><span>无选择过滤器</span><i class="dn"></i></span>
    <span class="combo c-b"><span>整个装配</span><i class="dn"></i></span>
    <span class="sbi">
      <svg class="ci"><use href="#f1"/></svg><span class="boxed"><svg class="i16"><use href="#f2"/></svg></span><i class="dn"></i><svg class="ci n"><use href="#f3"/></svg><svg class="ci n"><use href="#f4"/></svg><svg class="ci n"><use href="#f5"/></svg><i class="dn"></i><svg class="ci"><use href="#f6"/></svg><svg class="ci"><use href="#f7"/></svg><svg class="ci"><use href="#f8"/></svg><svg class="ci"><use href="#f9"/></svg><svg class="ci"><use href="#f10"/></svg><svg class="ci"><use href="#f11"/></svg><svg class="ci"><use href="#f12"/></svg><svg class="ci"><use href="#f13"/></svg><svg class="ci"><use href="#f14"/></svg><i class="sep sb-sep"></i><svg class="ci"><use href="#f15"/></svg><svg class="ci"><use href="#f16"/></svg><svg class="ci"><use href="#f17"/></svg><i class="dn dt"></i><svg class="ci"><use href="#f18"/></svg><i class="dn"></i><i class="sep sb-sep sb-end"></i>
    </span>
  </section>

  <main class="main">
    <aside class="resbar">
      <svg class="i16 rb-gear"><use href="#gear"/></svg>
      <span class="rb rb1"><svg class="i26"><use href="#r1"/></svg></span>
      <span class="rb rb-active"><svg class="i26"><use href="#r2"/></svg></span>
      <span class="rb rb3"><svg class="i26"><use href="#r3"/></svg></span>
      <span class="rb rb4"><svg class="i26"><use href="#r4"/></svg></span>
      <span class="rb rb5"><svg class="i26"><use href="#r5"/></svg></span>
      <span class="rb rb6"><svg class="i26"><use href="#r6"/></svg></span>
      <span class="rb rb7"><svg class="i26"><use href="#r7"/></svg></span>
    </aside>
    <aside class="nav">
      <div class="nav-head"><span>部件导航器</span><svg class="maxi"><use href="#maxi"/></svg></div>
      <div class="tree">
        <i class="guide gd1"></i><i class="guide gd2"></i><i class="guide gd3"></i><i class="guide gd4"></i>
        <div class="thead"><span class="th-n">名称<i class="up-tri"></i></span><span class="th-s">最新</span></div>
        <div class="rows">
          <div class="row"><div class="nm l1"><svg class="ex"><use href="#minus"/></svg><svg class="ck"><use href="#chk"/></svg><svg class="ti"><use href="#sheets"/></svg><span>图纸</span></div><div class="st"></div></div>
          <div class="row"><div class="nm l2"><svg class="ex"><use href="#minus"/></svg><svg class="ck"><use href="#chk"/></svg><svg class="ti"><use href="#sheet"/></svg><span>图纸页 "SHT1" (工作...</span></div><div class="st"><svg class="ck"><use href="#chk"/></svg></div></div>
          <div class="row"><div class="nm l3"><svg class="ex"><use href="#plus"/></svg><svg class="ck"><use href="#chk"/></svg><svg class="ti"><use href="#top"/></svg><span>导入的 "Top@7"</span></div><div class="st"><svg class="ck"><use href="#chk"/></svg></div></div>
          <div class="row"><div class="nm l3"><svg class="ex"><use href="#plus"/></svg><svg class="ck"><use href="#chk"/></svg><svg class="ti"><use href="#sect"/></svg><span>截面 "SX@8" A (...</span></div><div class="st"><svg class="ck"><use href="#chk"/></svg></div></div>
          <div class="row"><div class="nm l2"><i class="stub"></i><b class="q">?</b><svg class="ti"><use href="#fold"/></svg><span>过时</span></div><div class="st"></div></div>
          <div class="row"><div class="nm l1"><svg class="ex tight"><use href="#plus"/></svg><svg class="ti"><use href="#fold"/></svg><span>组</span></div><div class="st"></div></div>
          <div class="row"><div class="nm l1"><svg class="ex tight"><use href="#minus"/></svg><svg class="ti"><use href="#fold"/></svg><span>模型历史记录</span></div><div class="st"></div></div>
          <div class="row"><div class="nm l2"><i class="stub"></i><svg class="ck"><use href="#cbox"/></svg><svg class="ti"><use href="#csys"/></svg><span class="dim">基准坐标系 (0)</span></div><div class="st"><svg class="ck"><use href="#chk"/></svg></div></div>
          <div class="row"><div class="nm l2"><i class="stub"></i><svg class="ck"><use href="#cbox"/></svg><svg class="ti"><use href="#off"/></svg><span>偏置曲线 (1)</span></div><div class="st"><svg class="ck"><use href="#chk"/></svg></div></div>
          <div class="row"><div class="nm l2"><i class="stub"></i><svg class="ck"><use href="#cbox"/></svg><svg class="ti"><use href="#off"/></svg><span>偏置曲线 (2)</span></div><div class="st"><svg class="ck"><use href="#chk"/></svg></div></div>
          <div class="row"><div class="nm l2"><i class="stub"></i><svg class="ck"><use href="#cbox"/></svg><svg class="ti"><use href="#off"/></svg><span>偏置曲线 (3)</span></div><div class="st"><svg class="ck"><use href="#chk"/></svg></div></div>
          <div class="row"><div class="nm l2"><i class="stub"></i><svg class="ck"><use href="#cbox"/></svg><svg class="ti"><use href="#off"/></svg><span>偏置曲线 (4)</span></div><div class="st"><svg class="ck"><use href="#chk"/></svg></div></div>
          <div class="row"><div class="nm l2"><i class="stub"></i><svg class="ck"><use href="#cbox"/></svg><svg class="ti"><use href="#off"/></svg><span>偏置曲线 (5)</span></div><div class="st"><svg class="ck"><use href="#chk"/></svg></div></div>
          <div class="row"><div class="nm l2"><i class="stub"></i><svg class="ck"><use href="#cbox"/></svg><svg class="ti"><use href="#off"/></svg><span>偏置曲线 (6)</span></div><div class="st"><svg class="ck"><use href="#chk"/></svg></div></div>
          <div class="row"><div class="nm l2"><i class="stub"></i><svg class="ck"><use href="#cbox"/></svg><svg class="ti"><use href="#off"/></svg><span>偏置曲线 (7)</span></div><div class="st"><svg class="ck"><use href="#chk"/></svg></div></div>
          <div class="row"><div class="nm l2"><i class="stub"></i><svg class="ck"><use href="#cbox"/></svg><svg class="ti"><use href="#off"/></svg><span>偏置曲线 (8)</span></div><div class="st"><svg class="ck"><use href="#chk"/></svg></div></div>
          <div class="row"><div class="nm l2"><i class="stub"></i><svg class="ck"><use href="#cbox"/></svg><svg class="ti"><use href="#off"/></svg><span>偏置曲线 (9)</span></div><div class="st"><svg class="ck"><use href="#chk"/></svg></div></div>
          <div class="row"><div class="nm l2"><i class="stub"></i><svg class="ck"><use href="#cbox"/></svg><svg class="ti"><use href="#off"/></svg><span>偏置曲线 (10)</span></div><div class="st"><svg class="ck"><use href="#chk"/></svg></div></div>
          <div class="row"><div class="nm l2"><i class="stub"></i><svg class="ck"><use href="#cbox"/></svg><svg class="ti"><use href="#off"/></svg><span>偏置曲线 (11)</span></div><div class="st"><svg class="ck"><use href="#chk"/></svg></div></div>
          <div class="row"><div class="nm l2"><svg class="ex"><use href="#plus"/></svg><svg class="ck"><use href="#cbox"/></svg><svg class="ti"><use href="#grp"/></svg><span>特征组 (73) "1_featu...</span></div><div class="st"><svg class="ck"><use href="#chk"/></svg></div></div>
          <div class="row"><div class="nm l2"><i class="stub"></i><svg class="ck"><use href="#cbox"/></svg><svg class="ti"><use href="#cyl"/></svg><span>圆柱 (74)</span></div><div class="st"><svg class="ck"><use href="#chk"/></svg></div></div>
          <div class="row"><div class="nm l2"><i class="stub"></i><svg class="ck"><use href="#cbox"/></svg><svg class="ti"><use href="#cyl"/></svg><span>圆柱 (75)</span></div><div class="st"><svg class="ck"><use href="#chk"/></svg></div></div>
          <div class="row"><div class="nm l2"><i class="stub"></i><svg class="ck"><use href="#cbox"/></svg><svg class="ti"><use href="#ext"/></svg><span>拉伸 (76)</span></div><div class="st"><svg class="ck"><use href="#chk"/></svg></div></div>
          <div class="row"><div class="nm l2"><i class="stub"></i><svg class="ck"><use href="#cbox"/></svg><svg class="ti"><use href="#ext"/></svg><span>拉伸 (77)</span></div><div class="st"><svg class="ck"><use href="#chk"/></svg></div></div>
          <div class="row"><div class="nm l2"><i class="stub"></i><svg class="ck"><use href="#cbox"/></svg><svg class="ti"><use href="#chf"/></svg><span>倒斜角 (78)</span></div><div class="st"><svg class="ck"><use href="#chk"/></svg></div></div>
          <div class="row"><div class="nm l2"><i class="stub"></i><svg class="ck"><use href="#cbox"/></svg><svg class="ti"><use href="#rev"/></svg><span class="bold">旋转 (79)</span></div><div class="st"><svg class="ck"><use href="#chk"/></svg></div></div>
          <div class="row"><div class="nm"></div><div class="st"></div></div>
          <div class="row"><div class="nm"></div><div class="st"></div></div>
          <div class="row"><div class="nm"></div><div class="st"></div></div>
          <div class="row"><div class="nm"></div><div class="st"></div></div>
          <div class="row"><div class="nm"></div><div class="st"></div></div>
          <div class="row"><div class="nm"></div><div class="st"></div></div>
          <div class="row"><div class="nm"></div><div class="st"></div></div>
          <div class="row"><div class="nm"></div><div class="st"></div></div>
        </div>
        <div class="hscroll"><i class="arr-l"></i><span class="thumb">III</span><i class="arr-r"></i></div>
      </div>
      <div class="sash"></div>
      <div class="acc"><span>相依性</span><svg class="chev"><use href="#cvd"/></svg></div>
      <div class="acc"><span>细节</span><svg class="chev"><use href="#cvd"/></svg></div>
      <div class="acc"><span>预览</span><svg class="chev"><use href="#cvd"/></svg></div>
    </aside>
    <div class="canvas">
      <svg class="sheetsvg" viewBox="296 180 1336 813" width="1336" height="813">
        <g fill="none" stroke="#000">
          <path d="M312 180V993" stroke-width="2"/>
          <path d="M694 386H838V327H934V428H694Z" fill="url(#hatch)" stroke="none"/>
          <path d="M694 617H934V718H838V658H694Z" fill="url(#hatch)" stroke="none"/>
          <path d="M694 386H757V394H767V386H838M838 304V386M838 327H934M694 428H903M694 617H921M694 658H838M838 658V745M838 718H934" stroke-width="2"/>
          <path d="M694 294H842M842 294L838 304M842 294H930L934 303V354" stroke="#333" stroke-width="1.300"/>
          <path d="M934 695V745L930 750H842L838 745M694 750H842" stroke-width="1.400"/>
          <path d="M694 496H903M694 549H921" stroke-width="1.300"/>
          <path d="M694 522.500H742M752 522.500H770M778 522.500H872M877 522.500H895" stroke-width="1.200"/>
          <path d="M822 309H934M822 736H934" stroke="#777" stroke-width="1.400" stroke-dasharray="20 8"/>
          <path d="M957 309H1004" stroke-width="1.200"/>
          <path d="M936 736H1004" stroke="#555"/>
          <path d="M993 309V354M993 526V736" stroke-width="1.200"/>
          <path d="M694 353H838" stroke="#777" stroke-width="1.200"/>
          <path d="M757 343V386M767 343V386" stroke="#666"/>
          <ellipse cx="931" cy="299" rx="23" ry="21" stroke-width="1.100"/>
          <path d="M968 288H992L980 309ZM980 309L1006 264" stroke-width="1"/>
          <path d="M787 596H811L798 617ZM798 617L824 573" stroke-width="1"/>
          <path d="M838 750V799M934 750V837M684 787V837" stroke="#666"/>
          <path d="M838 788H934M684 825.500H934" stroke="#555"/>
          <path d="M772 698H803L838 660" stroke="#333"/>
          <path d="M792 368L859 427M793 648L874 617" stroke="#f0a050"/>
          <path d="M973 532h16" stroke="#666"/><ellipse cx="981" cy="532" rx="4" ry="3.500" stroke="#666"/>
          <path d="M962 617H1046M1034 526V617" stroke="#f7a049" stroke-width="2.600"/>
          <ellipse cx="1023" cy="530" rx="5" ry="3" stroke="#f7a049"/><ellipse cx="1023" cy="539" rx="5" ry="3" stroke="#f7a049"/>
          <circle cx="1374" cy="522" r="136.500" stroke-width="1.300"/>
          <circle cx="1374" cy="522" r="131" stroke-width="1.300"/>
          <path d="M1278.500 496A99 99 0 1 1 1278.500 548" stroke-width="1.300"/>
          <path d="M1283.700 496A94 94 0 1 1 1283.700 548" stroke-width="1.300"/>
          <path d="M1266 496H1363M1266 548H1358M1266 496V548" stroke-width="1.200"/>
          <path d="M1266 548V722M1469 530V722" stroke="#777" stroke-width="1.800"/>
          <path d="M1266 715H1469" stroke="#555"/>
          <path d="M1374 272V380M1374 397V407M1374 416V628M1374 638V656M1374 665V772" stroke="#888" stroke-width="1.800"/>
          <path d="M1212 522H1231M1241 522H1258M1267 522H1480M1490 522H1507M1517 522H1623" stroke-width="1.200"/>
          <path d="M1340 496V548" stroke="#333"/>
          <path d="M1334 476H1357L1346 496ZM1346 496L1372 452" stroke="#333"/>
          <path d="M1329 569H1352L1340 548ZM1340 548L1314 593" stroke="#333"/>
          <path d="M1327 248H1374M1327 797H1374" stroke="#333"/>
          <path d="M1374 248V272M1374 772V797" stroke-width="2.800"/>
          <path d="M1660 692C1625 700 1608 730 1612 800C1615 815 1622 828 1632 836"/>
          <path d="M1620 810H1630"/>
          <path d="M830 935H1632" stroke-width="2"/>
          <path d="M830 935V993M913 935V993M996 935V993M1078 935V993M1518 945V993M1589 945V993" stroke-width="1.500"/>
          <path d="M830 980H1078" stroke-width="1.200"/>
        </g>
        <g fill="#000">
          <path d="M694 353L702 350V356ZM838 788L848 786V790ZM934 788L924 786V790ZM684 825.500L698 823V828ZM934 825.500L920 823V828ZM993 309L990 326H996ZM993 736L990 719H996ZM838 660L826 665L832 671ZM1340 496L1337 510H1343ZM1340 548L1337 534H1343ZM1266 715L1280 712V718ZM1469 715L1455 712V718ZM1327 248L1340 245V251ZM1327 797L1340 794V800Z"/>
          <path d="M1034 617L1029 597H1039Z" fill="#f7a049"/>
          <circle cx="859" cy="427" r="4.500" fill="#a08c42"/><circle cx="874" cy="617" r="4.500" fill="#a08c42"/>
        </g>
        <g>
          <use href="#gtooth" transform="translate(1374,522)"/>
          <use href="#gtooth" transform="translate(1374,522) rotate(12)"/>
          <use href="#gtooth" transform="translate(1374,522) rotate(24)"/>
          <use href="#gtooth" transform="translate(1374,522) rotate(36)"/>
          <use href="#gtooth" transform="translate(1374,522) rotate(48)"/>
          <use href="#gtooth" transform="translate(1374,522) rotate(60)"/>
          <use href="#gtooth" transform="translate(1374,522) rotate(72)"/>
          <use href="#gtooth" transform="translate(1374,522) rotate(84)"/>
          <use href="#gtooth" transform="translate(1374,522) rotate(96)"/>
          <use href="#gtooth" transform="translate(1374,522) rotate(108)"/>
          <use href="#gtooth" transform="translate(1374,522) rotate(120)"/>
          <use href="#gtooth" transform="translate(1374,522) rotate(132)"/>
          <use href="#gtooth" transform="translate(1374,522) rotate(144)"/>
          <use href="#gtooth" transform="translate(1374,522) rotate(-12)"/>
          <use href="#gtooth" transform="translate(1374,522) rotate(-24)"/>
          <use href="#gtooth" transform="translate(1374,522) rotate(-36)"/>
          <use href="#gtooth" transform="translate(1374,522) rotate(-48)"/>
          <use href="#gtooth" transform="translate(1374,522) rotate(-60)"/>
          <use href="#gtooth" transform="translate(1374,522) rotate(-72)"/>
          <use href="#gtooth" transform="translate(1374,522) rotate(-84)"/>
          <use href="#gtooth" transform="translate(1374,522) rotate(-96)"/>
          <use href="#gtooth" transform="translate(1374,522) rotate(-108)"/>
          <use href="#gtooth" transform="translate(1374,522) rotate(-120)"/>
          <use href="#gtooth" transform="translate(1374,522) rotate(-132)"/>
        </g>
        <g class="dw">
          <text x="648" y="219" font-size="20" textLength="24" lengthAdjust="spacingAndGlyphs">A-A</text>
          <text x="1427" y="263" font-size="44" textLength="15" lengthAdjust="spacingAndGlyphs">A</text>
          <text x="1427" y="809" font-size="44" textLength="15" lengthAdjust="spacingAndGlyphs">A</text>
          <text x="942" y="274" font-size="34" textLength="11" lengthAdjust="spacingAndGlyphs">B</text>
          <text x="967" y="280" font-size="21" textLength="22" lengthAdjust="spacingAndGlyphs">1.6</text>
          <text x="714" y="349" font-size="22" textLength="14" lengthAdjust="spacingAndGlyphs">31</text>
          <text x="786" y="344" font-size="22" textLength="22" lengthAdjust="spacingAndGlyphs">3.6</text>
          <text x="813" y="335" font-size="17" textLength="24" lengthAdjust="spacingAndGlyphs">+0.1</text>
          <text x="819" y="349" font-size="17" textLength="7" lengthAdjust="spacingAndGlyphs">0</text>
          <text x="786" y="589" font-size="21" textLength="21" lengthAdjust="spacingAndGlyphs">1.6</text>
          <text x="879" y="783" font-size="20" textLength="14" lengthAdjust="spacingAndGlyphs">40</text>
          <text x="799" y="821" font-size="20" textLength="21" lengthAdjust="spacingAndGlyphs">105</text>
          <text x="1332" y="468" font-size="22" textLength="22" lengthAdjust="spacingAndGlyphs">3.2</text>
          <text transform="translate(1354,576) rotate(180)" font-size="22" textLength="22" lengthAdjust="spacingAndGlyphs">3.2</text>
          <text transform="translate(1335,543) rotate(-90)" font-size="19" textLength="43" lengthAdjust="spacingAndGlyphs">22 JS9</text>
          <text x="1338" y="704" font-size="20" textLength="31" lengthAdjust="spacingAndGlyphs">85.4</text>
          <text x="1373" y="696" font-size="16" textLength="25" lengthAdjust="spacingAndGlyphs">+0.2</text>
          <text x="1380" y="709" font-size="16" textLength="7" lengthAdjust="spacingAndGlyphs">0</text>
          <text x="853" y="968" font-size="13" textLength="47" lengthAdjust="spacingAndGlyphs">Signature</text>
          <text x="934" y="968" font-size="13" textLength="47" lengthAdjust="spacingAndGlyphs">Signature</text>
          <text x="1015" y="968" font-size="13" textLength="47" lengthAdjust="spacingAndGlyphs">Signature</text>
        </g>
        <g class="dwc">
          <text x="773" y="696" font-size="18" textLength="30" lengthAdjust="spacingAndGlyphs">清根</text>
          <text x="850" y="954" font-size="15" textLength="44">签 字</text>
          <text x="932" y="954" font-size="15" textLength="44">机 签</text>
          <text x="1014" y="954" font-size="15" textLength="44">手 签</text>
          <text x="870" y="992" font-size="13">日 期</text>
          <text x="1262" y="997" font-size="36" textLength="68" lengthAdjust="spacingAndGlyphs" class="dk">齿轮1</text>
          <text x="513" y="996" font-size="18" textLength="82" class="dk">技术要求</text>
          <text x="303" y="991" font-size="12.500" textLength="115" class="dk">图纸页 "SHT1" 工作</text>
          <text x="1535" y="957" font-size="15" textLength="36">比 例</text>
          <text x="1535" y="992" font-size="13" textLength="36">阶 段</text>
        </g>
        <g>
          <path d="M1373 890L1415 914V963L1373 987L1331 963V914Z" fill="#fff" fill-opacity=".9"/>
          <path d="M1373 893L1334 915.500C1355 903 1385 907 1394 930L1396 906Z" fill="#5f91c6" fill-opacity=".94"/>
          <path d="M1334 917C1352 905 1383 906 1392 922L1373 912L1351 925V950C1338 945 1333 930 1334 917Z" fill="#5f91c6" fill-opacity=".94"/>
          <path d="M1334 924C1340 918 1345 914 1351 913V949L1368 960C1352 966 1340 960 1334 955Z" fill="#5f91c6" fill-opacity=".94"/>
          <path d="M1388 899L1412 915.500V950C1408 925 1400 908 1388 899Z" fill="#65b8e0" fill-opacity=".94"/>
          <path d="M1396 915L1412 916V948C1408 958 1402 962 1395 964V925Z" fill="#65b8e0" fill-opacity=".94"/>
          <path d="M1352 962C1370 975 1395 972 1410 955V961.500L1373 984L1352 972Z" fill="#65b8e0" fill-opacity=".94"/>
          <path d="M1373 919L1357 928V948L1373 957L1389 948V928Z" fill="#65b8e0" stroke="#eef4f8" stroke-width="4"/>
          <path d="M1357 928L1373 937L1389 928L1373 919ZM1357 928V948L1373 957V937Z" fill="#5f91c6"/>
          <path d="M1373 937V957M1357 928L1373 937L1389 928" fill="none" stroke="#eef4f8"/>
          <text x="1424" y="950" font-size="48" textLength="201" lengthAdjust="spacingAndGlyphs" class="wm-t">3D世界网</text>
          <rect x="1518" y="962" width="114" height="20" fill="#fff" fill-opacity=".95"/>
          <path d="M1502 970l12-3 3 6c0 6-10 9-15 7 3-1 5-3 7-5z" fill="#e8501c"/>
          <text x="1527" y="979" font-size="14" class="ime">中</text>
          <path d="M1559 966a7 7 0 1 0 4 11a8 8 0 0 1-4-11z" fill="#1f6fb8"/>
          <text x="1573" y="978" font-size="14" class="ime">-,</text>
          <path d="M1594 969h15v11h-15z" fill="#1f6fb8"/><path d="M1596 972h11M1596 975h11M1596 978h11" stroke="#fff" stroke-dasharray="2 1"/>
          <circle cx="1622" cy="970" r="4" fill="#1f6fb8"/><path d="M1616 982c0-8 12-8 12 0z" fill="#1f6fb8"/>
          <text x="1425" y="967" font-size="16" textLength="197" class="wm-u">WWW.3DSJW.COM</text>
        </g>
      </svg>

      <div class="flabel fl1"><i class="grip"></i><span>第一个对象</span></div>
      <div class="flabel fl2"><i class="grip"></i><span>第二个对象</span></div>

      <div class="dialog">
        <div class="dlg-title"><svg class="i14 dt-g"><use href="#gear"/></svg><span>快速尺寸</span><span class="dt-r">↻</span><span class="dt-x">✕</span></div>
        <div class="dlg-body">
          <section class="sec s1h">
            <header class="sec-h"><span>参考</span><svg class="chev"><use href="#up"/></svg></header>
            <div class="lrow"><svg class="i14"><use href="#chk"/></svg><span class="lt">选择第一个对象</span><span class="ibtn"><svg class="i20"><use href="#tgt"/></svg></span></div>
            <div class="lrow mt2"><svg class="i14"><use href="#chk"/></svg><span class="lt">选择第二个对象</span><span class="ibtn"><svg class="i20"><use href="#tgt"/></svg></span></div>
          </section>
          <section class="sec s2h">
            <header class="sec-h"><span>原点</span><svg class="chev"><use href="#up"/></svg></header>
            <div class="origin"><div class="hl"><svg class="i14"><use href="#flag"/></svg><span class="lt">指定位置</span></div><span class="ibtn small"><svg class="i20" viewBox="0 0 24 24"><circle cx="6" cy="8" r="3" fill="none" stroke="#c8a400" stroke-width="1.600"/><circle cx="6" cy="12" r="3" fill="none" stroke="#e0b400" stroke-width="1.600"/><circle cx="4" cy="20" r="1.300" fill="#e01010"/><text x="8" y="20" class="sv-s" font-size="16" font-weight="700" fill="#111">A</text></svg></span><span class="hlb"><svg class="i24" viewBox="0 0 24 24"><path d="M1 13h22M12 2v20" stroke="#111"/><circle cx="12" cy="13" r="1.500" fill="#e01010"/><text x="14" y="10" class="sv-n" font-size="10" font-weight="700" fill="#111">X</text></svg></span></div>
            <div class="chkrow"><i class="cbx"></i><span>自动放置</span></div>
            <div class="align"><span>对齐</span><svg class="chev"><use href="#cvd"/></svg></div>
          </section>
          <section class="sec s3h">
            <header class="sec-h"><span>测量</span><svg class="chev"><use href="#up"/></svg></header>
            <div class="meth"><span class="lt">方法</span><svg class="m1"><use href="#qd"/></svg><svg class="m2"><use href="#dx"/></svg><svg class="m3"><use href="#dm"/></svg><svg class="m4"><use href="#ang"/></svg><span class="mdrop"><i class="dn lg"></i></span></div>
          </section>
          <section class="sec s4h">
            <header class="sec-h"><span>驱动</span><svg class="chev"><use href="#up"/></svg></header>
            <div class="drive"><span class="lt">方法</span><span class="dsel"><span>自动判断</span><i class="dn"></i></span></div>
          </section>
          <section class="sec s5h">
            <header class="sec-h"><span>设置</span><svg class="chev"><use href="#up"/></svg></header>
            <div class="lrow nopad"><span class="lt">设置</span><span class="ibtn"><svg class="i28" viewBox="0 0 28 28"><text x="1" y="12" class="sv-s" fill="#2a2080" font-size="13" font-weight="700">A</text><text x="9" y="23" class="sv-s it" fill="#1a2fb0" font-size="24" font-weight="700">A</text><path d="M3 26h23" stroke="#1a2fb0" stroke-width="1.500"/></svg></span></div>
            <div class="lrow nopad mt2"><span class="lt">选择要继承的尺寸</span><span class="ibtn"><svg class="i28"><use href="#drop"/></svg></span></div>
          </section>
          <div class="dlg-foot"><span class="closebtn">关闭</span></div>
        </div>
      </div>

      <div class="edit">
        <i class="grip tall"></i>
        <div class="edit-main">
          <div class="ed-a"><span class="ed-ico"><svg class="i20"><use href="#ddi"/></svg><i class="dn"></i></span><span class="ed-combo"><i class="dn"></i></span><span class="ed-btn"><svg class="i20" viewBox="0 0 22 22"><rect x="2" y="2" width="18" height="18" fill="#fff" stroke="#111"/><rect x="2" y="2" width="18" height="2" fill="#2a2080"/><rect x="2" y="2" width="2" height="18" fill="#2a2080"/><text x="5" y="17" class="sv-s" font-size="15" font-weight="700" fill="#111">A</text></svg></span></div>
          <div class="ed-b"><span class="ed-h"><span>H</span><i class="dn"></i></span></div>
          <div class="inp ed-c"></div>
          <div class="ed-d">
            <span class="inp w71"></span><span class="xx">X.XX</span><span class="ed-dd"><i class="dn"></i></span>
            <span class="stack"><span>0.0300000</span><span>0.0000000</span></span>
            <span class="ed-dd off"><i class="dn"></i></span><span class="inp w71 ml3"></span>
          </div>
          <div class="inp ed-e"></div>
          <div class="ed-f"><span class="ed-btn"><svg class="i20" viewBox="0 0 28 28"><text x="1" y="12" class="sv-s" fill="#2a2080" font-size="13" font-weight="700">A</text><text x="9" y="23" class="sv-s it" fill="#1a2fb0" font-size="24" font-weight="700">A</text><path d="M3 26h23" stroke="#1a2fb0" stroke-width="1.500"/></svg></span><span class="ed-btn wr"><svg class="i20"><use href="#wrench"/></svg></span></div>
        </div>
        <div class="h7"><b>H7</b><span>限制和拟合</span></div>
        <div class="list">
          <div class="list-items"><span class="sel">H</span><span>JS</span><span>J</span><span>K</span><span>M</span><span>N</span><span>P</span><span>R</span><span>S</span><span>T</span><span>U</span><span>V</span><span>X</span><span>Y</span><span>Z</span></div>
          <div class="vscroll"><i class="arr-u"></i><span class="vthumb">≡</span><i class="arr-d"></i></div>
        </div>
      </div>
    </div>
  </main>

  <div class="meter">
    <div class="m-pill">
      <div class="m-rows"><span><b class="ua">↑</b>0.03K/s</span><span><b class="da">↓</b>0K/s</span></div>
      <span class="m-plus">+</span><i class="m-dot"></i>
    </div>
    <div class="m-ball"><span>77%</span></div>
    <span class="winmin2">-</span>
  </div>
</div>
</body>
</html>
```

FILE: styles.css
```css
*{box-sizing:border-box}
html,body{margin:0;padding:0;background:#fff}
body{font-family:"Noto Sans","Noto Sans CJK SC",sans-serif;font-size:12px;color:#222;line-height:1}
i{font-style:normal;display:block}
svg{display:block;flex:none}
.defs{position:absolute}
.sv-s{font-family:"Liberation Serif",serif}
.sv-n{font-family:"Liberation Sans",sans-serif}
.it{font-style:italic}
.app{position:relative;width:1632px;height:993px;overflow:hidden;display:flex;flex-direction:column}
.i12{width:12px;height:12px}.i14{width:14px;height:14px}.i16{width:16px;height:16px}.i18{width:18px;height:18px}
.i20{width:20px;height:20px}.i24{width:24px;height:24px}.i26{width:26px;height:26px}.i28{width:28px;height:28px}.i32{width:32px;height:32px}
.dn{width:0;height:0;border-left:3.5px solid transparent;border-right:3.5px solid transparent;border-top:4px solid #222;flex:none}
.dn.lg{border-left-width:6px;border-right-width:6px;border-top-width:5px;border-top-color:#444}

/* title bar */
.titlebar{height:26px;display:flex;align-items:center;background:#fff;position:relative;flex:none}
.nx{font:700 23px/26px "Liberation Sans",sans-serif;color:#8ea1b0;margin-left:4px;width:37px;letter-spacing:-.5px}
.tsep{width:1px;height:20px;background:#ddd}
.t-save{margin-left:9px}.t-a{margin-left:6px}.t-undo{margin-left:6px}.t-dn1{margin-left:6px}.t-redo{margin-left:8px}
.t-b{margin-left:6px}.t-cut{margin-left:6px}.t-copy{margin-left:7px}.t-paste{margin-left:8px}.t-c{margin-left:5px}
.t-qd{margin-left:5px}.t-dn2{margin-left:1px}.t-d{margin-left:4px}.t-er{margin-left:5px}.t-e{margin-left:5px}
.t-sw{margin-left:6px}.t-txt{font-size:11.500px;margin-left:5px;white-space:nowrap}
.t-win{margin-left:7px}.t-w2{margin-left:3px}.t-dn3{margin-left:4px}.t-dn4{margin-left:4px}
.apptitle{position:absolute;left:881px;top:5px;font-size:13px;line-height:16px;white-space:nowrap;letter-spacing:.17px}
.siemens{position:absolute;left:1529px;top:6px;font:700 13px/16px "Liberation Sans",sans-serif;color:#0a9a9a;letter-spacing:.3px}
.winmin{position:absolute;left:1616px;top:8px;font:700 14px/16px "Liberation Sans",sans-serif}

/* tabs */
.tabs{height:28px;background:#dcdcdc;display:flex;align-items:stretch;flex:none;position:relative}
.tab-file{width:81px;margin-right:2px;background:#55a1bb;color:#fff;font-size:13px;line-height:28px;text-align:center}
.tab{padding:0 13px;font-size:13px;line-height:28px;color:#222}
.tab.active{background:#fff;color:#0f7b9e}
.search{position:absolute;left:1352px;top:4px;width:125px;height:19px;background:#fff;border:1px solid #bdbdbd;display:flex;align-items:center;justify-content:space-between;padding:0 1px;color:#aaa;font-size:11px}

/* ribbon */
.ribbon{height:94px;display:flex;padding-top:5px;background:#fff;border-bottom:2px solid #e0e0e0;flex:none}
.grp{height:86px;display:flex;flex-direction:column;border-right:1px solid #dedede;position:relative;flex:none}
.grp:last-child{border-right:0}
.g1w{width:73px}.g2w{width:244px}.g3w{width:130px}.g4w{width:274px}.g5w{width:74px}.g6w{width:61px}.g7w{width:104px}.g8w{width:399px}.g9w{width:273px}
.gbody{flex:1;display:flex;position:relative;min-height:0}
.gbody.col{flex-direction:column;padding:4px 0 0 4px;gap:6px}
.pl15{padding-left:15px}.pl6{padding-left:6px}.pl9{padding-left:9px}.pl8{padding-left:8px}
.glabel{height:14px;text-align:center;font-size:11px;line-height:14px;color:#117a9e;position:relative;white-space:nowrap}
.lp16{padding-right:16px}.lp18{padding-right:18px}
.gl-dn{position:absolute;right:6px;top:5px;border-top-color:#333}
.g7w .glabel{text-align:left;padding-left:2px}
.big{display:flex;flex-direction:column;align-items:center;font-size:11px;line-height:14px;white-space:nowrap;flex:none}
.big span{margin-top:5px}
.big .dn{margin-top:5px;border-top-color:#333}
.w73{width:73px}.w62{width:62px}.w60{width:60px}.w54{width:54px}.w44{width:44px}.w40{width:40px}.w50{width:50px}.w61{width:61px}
.sgrid{display:grid;grid-auto-rows:21px;justify-items:center;align-items:center;flex:none}
.sgrid.c2{grid-template-columns:24px 24px;width:48px}
.sgrid.c3{grid-template-columns:24px 24px 24px}
.sgrid.c3n{grid-template-columns:repeat(3,25.500px)}
.sgrid.c1{grid-template-columns:26px;grid-auto-rows:23px}
.c2s{grid-template-columns:23px 23px;border:1px solid #ddd;height:66px;grid-auto-rows:22px}
.n-dn{margin:7px 0 0 2px}
.ups{width:14px;margin-left:1px;display:flex;flex-direction:column;gap:18px;align-items:center;padding-top:8px}
.upa{width:0;height:0;border-left:3.5px solid transparent;border-right:3.5px solid transparent;border-bottom:4px solid #aaa}
.dnl{border-top-color:#222}
.irow{display:flex;align-items:center;height:24px}
.ci{width:23px;height:20px;flex:none}
.sep{width:1px;height:24px;margin:0 2.500px;background:#ddd;flex:none}
.tol{font:9px/8px "Liberation Sans",sans-serif;text-align:center;letter-spacing:-.3px}
.tol b{display:block;font-weight:400}
.fit{font:8.500px/9px "Liberation Sans",sans-serif;color:#2a2fb0;text-align:center;letter-spacing:-.4px}
.tiny2{font:700 7px/8px "Liberation Sans",sans-serif;display:flex;flex-direction:column;align-items:center}
.abc{justify-content:flex-end;font-size:8px;color:#222}
.dimbar{width:18px;height:6px;border:1px solid #c8202a;border-width:0 1px;background:linear-gradient(#c8202a,#c8202a) center/100% 1px no-repeat;margin-bottom:2px}
.xyz{justify-content:flex-end;color:#d9252b;font-size:9px}
.rdot{width:3px;height:3px;border-radius:50%;background:#d9252b;margin-bottom:2px}

/* selection bar */
.selbar{height:32px;display:flex;align-items:center;padding-left:9px;background:#fff;border-bottom:2px solid #a8a8a8;flex:none}
.sb-menu{font-size:11px;margin-left:3px;width:41px;white-space:nowrap}
.sb-d{margin-left:3px}
.combo{height:20px;border:1px solid #999;display:flex;align-items:center;justify-content:space-between;padding:0 6px 0 3px;font-size:11.500px;background:#fff}
.c-a{width:133px;margin-left:18px}.c-b{width:140px;margin-left:8px}
.sbi{display:flex;align-items:center;margin-left:5px}
.sbi .ci{width:25px}
.sbi .ci.n{width:23px}
.sbi .dn{margin:0 6px}
.sbi .dn.dt{margin:0 3px 0 4px}
.boxed{border:1px solid #b03030;width:16px;height:18px;display:block;margin:0 1px}
.boxed svg{width:14px;height:16px}
.sb-sep{height:22px;margin:0 4px}
.sb-end{margin-left:0}

/* main */
.main{flex:1;display:flex;min-height:0}
.resbar{width:32px;background:#dcdcdc;border-right:1px solid #999;position:relative;flex:none}
.rb-gear{position:absolute;left:7px;top:5px;color:#333}
.rb{position:absolute;left:4px;display:block}
.rb1{top:50px}.rb-active{top:82px;left:2px;width:30px;height:46px;background:#fff;border:1px solid #bbb;border-right:0;padding:9px 2px}
.rb3{top:134px}.rb4{top:192px}.rb5{top:242px}.rb6{top:295px}.rb7{top:337px}
.nav{width:264px;background:#fff;border-right:1px solid #8c8c8c;display:flex;flex-direction:column;flex:none;padding-left:6px;padding-right:9px}
.nav-head{height:29px;display:flex;align-items:center;justify-content:space-between;padding:0 6px 0 4px;font-size:12px}
.maxi{width:14px;height:12px}
.tree{position:relative;border:2px solid #dcdcdc;height:706px;display:flex;flex-direction:column;flex:none;overflow:hidden}
.thead{height:20px;background:#f0f0f0;display:flex;line-height:20px;border-bottom:1px solid #ddd;flex:none}
.th-n{width:199px;padding-left:6px;border-right:1px solid #ddd;position:relative}
.th-s{padding-left:6px}
.up-tri{position:absolute;left:48px;top:8px;width:0;height:0;border-left:4.500px solid transparent;border-right:4.500px solid transparent;border-bottom:5px solid #111}
.rows{flex:1;min-height:0;overflow:hidden}
.row{height:20px;display:flex;border-bottom:1px solid #ececec}
.row:nth-child(even){background:#f9f9f9}
.nm{width:199px;border-right:1px solid #ececec;display:flex;align-items:center;white-space:nowrap;overflow:hidden}
.nm span{margin-left:3px;line-height:19px}
.st{display:flex;align-items:center;padding-left:7px;flex:1}
.l1{padding-left:5px}.l2{padding-left:24px}.l3{padding-left:43px}
.ex{width:10px;height:10px;margin-right:6px;position:relative}
.ex.tight{margin-right:4px}
.ck{width:14px;height:14px}
.ti{width:16px;height:16px}
.stub{width:8px;height:0;margin:0 4px;border-top:1px dotted #999}
.q{width:14px;color:#e8c800;font:700 16px/16px "Liberation Sans",sans-serif;text-align:center;-webkit-text-stroke:.4px #444}
.dim{color:#a8a8a8}
.bold{font-weight:700}
.guide{position:absolute;border-left:1px dotted #999;width:0;z-index:1}
.gd1{left:9px;top:39px;height:119px}
.gd2{left:28px;top:49px;height:70px}
.gd3{left:47px;top:69px;height:31px}
.gd4{left:28px;top:159px;height:362px}
.hscroll{height:17px;background:#f0f0f0;display:flex;align-items:center;flex:none;position:relative}
.arr-l{width:0;height:0;margin-left:6px;border-top:4px solid transparent;border-bottom:4px solid transparent;border-right:4px solid #444}
.thumb{margin-left:8px;width:125px;height:14px;background:linear-gradient(#f2f2f2,#cfcfcf);border:1px solid #a8a8a8;border-radius:2px;text-align:center;font-size:8px;line-height:12px;color:#444}
.arr-r{width:0;height:0;position:absolute;right:8px;top:4px;border-top:4px solid transparent;border-bottom:4px solid transparent;border-left:4px solid #444}
.sash{height:5px;background:#e4e4e4;border:1px solid #bbb;flex:none}
.acc{height:24px;border-bottom:2px solid #d8d8d8;display:flex;align-items:center;justify-content:space-between;padding:0 7px;color:#117a9e;font-size:14px;flex:none}
.chev{width:12px;height:8px}
.canvas{flex:1;position:relative;background:#cbcbcb;overflow:hidden;min-width:0}
.sheetsvg{position:absolute;left:0;top:0}
.dw text{font-family:"Liberation Serif",serif;fill:#555}
.dwc text{font-family:"Noto Sans CJK SC",sans-serif;fill:#777}
.dwc text.dk{fill:#333}
.wm-t{font-family:"Noto Sans CJK SC",sans-serif;font-weight:700;fill:#62b6e2;stroke:#eaf3f8;stroke-width:3;paint-order:stroke}
.wm-u{font-family:"Liberation Sans",sans-serif;font-weight:700;fill:#62b6e2;stroke:#eaf3f8;stroke-width:2;paint-order:stroke}
.ime{font-family:"Noto Sans CJK SC",sans-serif;font-weight:700;fill:#1f6fb8}

/* floating labels */
.flabel{position:absolute;height:28px;width:81px;background:#f0f0f0;border:1px solid #c4c4c4;display:flex;align-items:center;font-size:12px}
.flabel span{margin-left:7px;white-space:nowrap}
.fl1{left:421px;top:170px}
.fl2{left:416px;top:455px}
.grip{width:7px;height:20px;margin-left:3px;background-image:radial-gradient(#b5b5b5 1px,transparent 1.200px);background-size:3px 3px;flex:none}
.grip.tall{height:166px;margin-left:2px}

/* quick dimension dialog */
.dialog{position:absolute;left:70px;top:45px;width:328px;height:562px;background:#f0f0f0;display:flex;flex-direction:column;box-shadow:0 0 0 1px #e4e4e4}
.dlg-title{height:24px;background:#55a1bb;color:#fff;display:flex;align-items:center;font-size:13px;flex:none;position:relative;padding-left:8px}
.dt-g{color:#fff;margin-right:10px}
.dt-r{position:absolute;left:285px;top:2px;font:700 17px/20px "DejaVu Sans",sans-serif}
.dt-x{position:absolute;left:305px;top:2px;font:700 16px/20px "DejaVu Sans",sans-serif}
.dlg-body{flex:1;display:flex;flex-direction:column;padding:4px 6px 0;gap:4px}
.sec{background:#fff;border-bottom:2px solid #d0d0d0;padding:0 9px;flex:none}
.s1h{height:104px}.s2h{height:120px}.s3h{height:80px;margin-top:-1px}.s4h{height:63px}.s5h{height:104px}
.sec-h{height:30px;display:flex;align-items:center;justify-content:space-between;color:#117a9e;font-size:13.500px;padding-bottom:5px;margin-left:-1px}
.sec-h .chev{margin-right:-3px}
.lrow{display:flex;align-items:center;height:32px;padding-left:2px}
.lrow.nopad{padding-left:0}
.mt2{margin-top:2px}
.lt{margin-left:4px;line-height:16px;white-space:nowrap}
.nopad .lt,.meth .lt,.drive .lt{margin-left:0}
.ibtn{margin-left:auto;width:32px;height:32px;background:#fff;border:1px solid #aaa;display:flex;align-items:center;justify-content:center;flex:none}
.ibtn.small{width:24px;height:24px;margin:0 2px 0 4px}
.origin{display:flex;align-items:center;height:32px}
.hl{width:236px;height:32px;background:#fcdd75;display:flex;align-items:center;padding-left:2px}
.hlb{width:32px;height:32px;background:#fcdd75;display:flex;align-items:center;justify-content:center}
.chkrow{display:flex;align-items:center;gap:4px;margin-top:7px;height:13px}
.cbx{width:13px;height:13px;border:1px solid #8c8c8c;background:linear-gradient(135deg,#e0e0e0,#fff);box-shadow:inset 0 0 0 1px #d8d8d8}
.align{height:24px;margin-top:5px;background:#efefef;border:1px solid #ddd;display:flex;align-items:center;justify-content:space-between;padding:0 5px 0 8px;color:#117a9e}
.meth{display:flex;align-items:center;height:32px;margin-top:6px}
.m1{width:24px;height:20px;margin-left:118px}
.m2{width:24px;height:16px;margin-left:8px}
.m3{width:32px;height:32px;margin-left:8px}
.m4{width:22px;height:22px;margin-left:7px}
.mdrop{width:20px;height:32px;border:1px solid #aaa;margin-left:auto;display:flex;align-items:center;justify-content:center}
.drive{display:flex;align-items:center;justify-content:space-between;height:25px}
.dsel{width:141px;height:25px;border:1px solid #aaa;display:flex;align-items:center;justify-content:space-between;padding:0 6px 0 5px}
.dlg-foot{display:flex;justify-content:flex-end;padding:8px 10px 0 0}
.closebtn{width:54px;height:25px;background:#e4e4e4;border:1px solid #a6a6a6;text-align:center;line-height:23px;color:#222}

/* inline edit toolbar */
.edit{position:absolute;left:607px;top:174px;width:309px;height:172px;background:#f0f0f0;border:1px solid #b5b5b5;display:flex;align-items:flex-start;padding-top:3px}
.edit-main{position:absolute;left:17px;top:3px;width:287px;display:flex;flex-direction:column}
.ed-a{display:flex;height:25px}
.ed-ico{width:43px;height:25px;background:#fff;border:1px solid #b5b5b5;display:flex;align-items:center;justify-content:space-between;padding:0 5px}
.ed-combo{width:122px;height:25px;margin-left:3px;background:#fff;border:1px solid #b5b5b5;display:flex;align-items:center;justify-content:flex-end;padding-right:4px}
.ed-btn{width:24px;height:24px;margin-left:6px;background:#f0f0f0;border:1px solid #b5b5b5;display:flex;align-items:center;justify-content:center;flex:none}
.ed-b{height:22px;padding-top:2px}
.ed-h{width:41px;height:21px;background:#fff;border:1px solid #b5b5b5;display:flex;align-items:center;justify-content:space-between;padding:0 5px;color:#222}
.inp{background:#fff;border:1px solid #b5b5b5;display:block}
.ed-c,.ed-e{height:22px;width:286px}
.ed-d{display:flex;align-items:center;height:47px}
.w71{width:71px;height:22px}
.ml3{margin-left:3px}
.xx{width:33px;margin-left:2px;font-size:12px}
.ed-dd{width:15px;height:23px;background:#f0f0f0;border:1px solid #aaa;display:flex;align-items:center;justify-content:center;flex:none}
.ed-dd.off{border-color:#ccc;margin-left:5px}
.ed-dd.off .dn{border-top-color:#aaa}
.stack{display:flex;flex-direction:column;gap:2px;margin-left:9px;width:64px;flex:none}
.stack span{height:21px;background:#fff;color:#7a7a7a;font-size:12px;line-height:21px;padding-left:4px;overflow:hidden;white-space:nowrap}
.ed-f{display:flex;justify-content:flex-end;height:24px;padding:1px 0 0;margin-right:-1px}
.ed-f .ed-btn{margin-left:2px}
.ed-btn.wr{background:#72b2cb;border-color:#72b2cb}
.h7{position:absolute;left:63px;top:3px;width:107px;height:66px;background:#fff;border:1px solid #b5b5b5;display:flex;align-items:center;overflow:hidden}
.h7 b{font:700 25px/30px "Liberation Sans",sans-serif;color:#a60b0b;margin-left:15px;flex:none}
.h7 span{font-size:11px;margin-left:12px;white-space:nowrap;flex:none}
.list{position:absolute;left:17px;top:53px;width:41px;height:286px;background:#fff;border:1px solid #b5b5b5;display:flex}
.list-items{width:23px;display:flex;flex-direction:column}
.list-items span{height:19px;line-height:19px;padding-left:3px;font-size:12.500px;color:#222}
.list-items .sel{background:#aed6e2}
.vscroll{flex:1;background:#f0f0f0;position:relative}
.vthumb{position:absolute;left:1px;top:88px;width:15px;height:148px;background:linear-gradient(90deg,#e8e8e8,#f6f6f6 30%,#cfcfcf);border:1px solid #b0b0b0;border-radius:2px;text-align:center;line-height:144px;font-size:11px;color:#444}
.arr-u,.arr-d{position:absolute;left:5px;width:0;height:0;border-left:3.500px solid transparent;border-right:3.500px solid transparent}
.arr-u{top:7px;border-bottom:4px solid #444}
.arr-d{bottom:7px;border-top:4px solid #444}

/* net meter */
.meter{position:absolute;left:1485px;top:15px;width:147px;height:48px}
.m-pill{position:absolute;left:24px;top:6px;width:103px;height:39px;border-radius:20px;background:linear-gradient(#f8f8f8,#d6d6d6);box-shadow:0 1px 2px #888}
.m-rows{position:absolute;left:27px;top:7px;width:47px;display:flex;flex-direction:column;gap:5px;font-size:10px;line-height:10px}
.m-rows span{display:flex;justify-content:space-between;white-space:nowrap;letter-spacing:-.2px}
.ua{color:#e03a1a;font-weight:700}.da{color:#1a9a3a;font-weight:700}
.m-plus{position:absolute;left:76px;top:9px;width:22px;height:22px;border-radius:50%;background:radial-gradient(#4fa0f0,#1a5fc8);color:#fff;font:700 16px/22px "Liberation Sans",sans-serif;text-align:center}
.m-dot{position:absolute;left:89px;top:7px;width:9px;height:9px;border-radius:50%;background:#e0323a}
.m-ball{position:absolute;left:0;top:0;width:48px;height:48px;border-radius:50%;background:linear-gradient(#a8683a,#f08a18 22%,#f77f00 70%,#ff9a28);border:3px solid #eee;box-shadow:0 0 2px 1px #888;color:#fff;font-size:16px;line-height:42px;text-align:center}
.winmin2{position:absolute;left:131px;top:13px;font:700 14px/16px "Liberation Sans",sans-serif}
```
